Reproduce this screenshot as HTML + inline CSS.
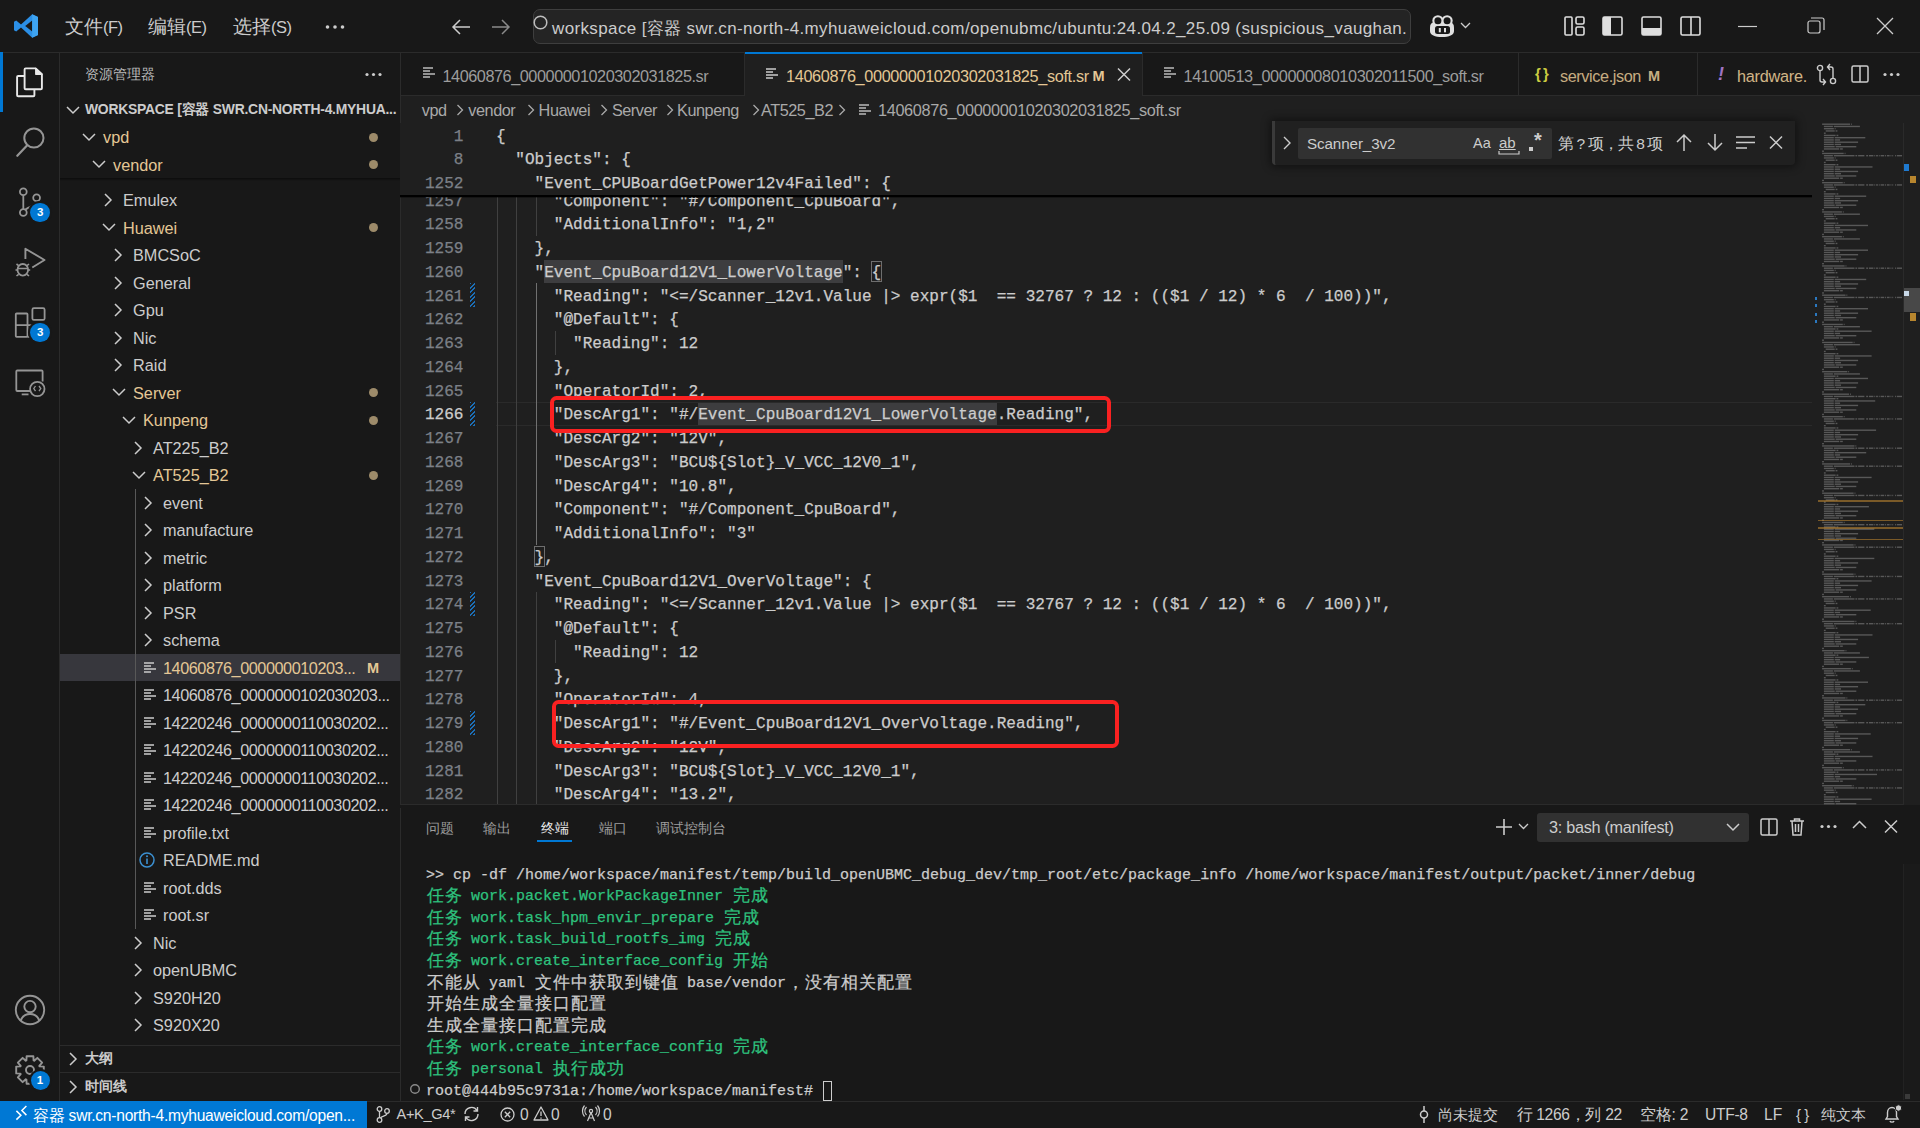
<!DOCTYPE html><html><head><meta charset="utf-8"><style>
*{margin:0;padding:0;box-sizing:border-box}
html,body{width:1920px;height:1128px;overflow:hidden;background:#181818}
body{position:relative;font-family:"Liberation Sans",sans-serif;color:#cccccc;font-size:16.25px}
.a{position:absolute;white-space:pre}
.mono{font-family:"Liberation Mono",monospace;-webkit-text-stroke:0.25px currentColor}
svg{position:absolute;overflow:visible}
</style></head><body><div class="a" style="left:400px;top:95.75px;width:1520px;height:708.5px;background:#1f1f1f"></div>
<div class="a" style="left:0px;top:51.5px;width:1920px;height:1px;background:#2b2b2b"></div>
<div class="a" style="left:59px;top:52px;width:1px;height:1048.5px;background:#2b2b2b"></div>
<div class="a" style="left:399.5px;top:52px;width:1px;height:1048.5px;background:#2b2b2b"></div>
<svg style="left:13px;top:13px;" width="26" height="26" viewBox="0 0 26 26"><path d="M19.2 1.2 L25 4 V22 L19.2 24.8 L8 14.6 L3.2 18.4 L1 17.2 V8.8 L3.2 7.6 L8 11.4 Z" fill="#2b8fe6"/><path d="M19.2 7.6 V18.4 L12.2 13 Z" fill="#181818"/><path d="M19.2 1.2 L25 4 V22 L19.2 24.8 Z" fill="#3ea4f2"/></svg>
<div class="a" style="left:65px;top:9px;height:36px;line-height:36px;color:#cccccc;font-size:19.3px">文件<span style="font-size:16.5px;letter-spacing:-0.5px">(F)</span></div>
<div class="a" style="left:148px;top:9px;height:36px;line-height:36px;color:#cccccc;font-size:19.3px">编辑<span style="font-size:16.5px;letter-spacing:-0.5px">(E)</span></div>
<div class="a" style="left:233px;top:9px;height:36px;line-height:36px;color:#cccccc;font-size:19.3px">选择<span style="font-size:16.5px;letter-spacing:-0.5px">(S)</span></div>
<svg style="left:325px;top:24px;" width="22" height="6" viewBox="0 0 22 6"><circle cx="2.5" cy="3" r="1.8" fill="#cccccc"/><circle cx="10.0" cy="3" r="1.8" fill="#cccccc"/><circle cx="17.5" cy="3" r="1.8" fill="#cccccc"/></svg>
<svg style="left:451px;top:17px;" width="20" height="20" viewBox="0 0 20 20"><path d="M19 10 H2 M9 3 L2 10 L9 17" stroke="#cccccc" stroke-width="1.5" fill="none"/></svg>
<svg style="left:491px;top:17px;" width="20" height="20" viewBox="0 0 20 20"><path d="M1 10 H18 M11 3 L18 10 L11 17" stroke="#8a8a8a" stroke-width="1.5" fill="none"/></svg>
<div class="a" style="left:532.5px;top:8.5px;width:878px;height:35.5px;background:#242424;border:1.5px solid #3e3e3e;border-radius:7px"></div>
<svg style="left:533px;top:15px;" width="16" height="16" viewBox="0 0 16 16"><circle cx="7.5" cy="7.5" r="6.3" stroke="#bdbdbd" stroke-width="1.5" fill="none"/></svg>
<div class="a" style="left:552px;top:10.5px;line-height:35.5px;height:35.5px;font-size:17px;letter-spacing:0.37px;color:#cccccc">workspace [容器 swr.cn-north-4.myhuaweicloud.com/openubmc/ubuntu:24.04.2_25.09 (suspicious_vaughan.</div>
<svg style="left:1428px;top:14px;" width="28" height="24" viewBox="0 0 28 24"><path d="M2 13.5 C2 10 3.5 8.5 6 8.5 H22 C24.5 8.5 26 10 26 13.5 V17 C26 21 21 23 14 23 C7 23 2 21 2 17 Z" fill="#e0e0e0"/><circle cx="9.9" cy="6.8" r="5.6" fill="#e0e0e0"/><circle cx="19.1" cy="6.8" r="5.6" fill="#e0e0e0"/><circle cx="9.9" cy="6.8" r="3.5" fill="#181818"/><circle cx="19.1" cy="6.8" r="3.5" fill="#181818"/><rect x="7" y="12" width="15" height="8" rx="2.5" fill="#181818"/><rect x="10.8" y="14" width="2" height="4.3" fill="#e0e0e0"/><rect x="16" y="14" width="2" height="4.3" fill="#e0e0e0"/></svg>
<svg style="left:1460px;top:22px;" width="11" height="7" viewBox="0 0 11 7"><path d="M1 1 L5.5 5.5 L10 1" stroke="#cccccc" stroke-width="1.3" fill="none"/></svg>
<svg style="left:1564px;top:16px;" width="21" height="20" viewBox="0 0 21 20"><rect x="1" y="1" width="7" height="18" rx="1" stroke="#dedede" stroke-width="1.6" fill="none"/><rect x="12" y="1" width="8" height="7" rx="1.5" stroke="#dedede" stroke-width="1.6" fill="none"/><rect x="12" y="11" width="8" height="8" rx="1.5" stroke="#dedede" stroke-width="1.6" fill="none"/></svg>
<svg style="left:1602px;top:16px;" width="21" height="20" viewBox="0 0 21 20"><rect x="1" y="1" width="19" height="18" rx="1.5" stroke="#dedede" stroke-width="1.6" fill="none"/><rect x="1" y="1" width="8" height="18" fill="#dedede"/></svg>
<svg style="left:1641px;top:16px;" width="21" height="20" viewBox="0 0 21 20"><rect x="1" y="1" width="19" height="18" rx="1.5" stroke="#dedede" stroke-width="1.6" fill="none"/><rect x="1" y="12" width="19" height="7" fill="#dedede"/></svg>
<svg style="left:1680px;top:16px;" width="21" height="20" viewBox="0 0 21 20"><rect x="1" y="1" width="19" height="18" rx="1.5" stroke="#dedede" stroke-width="1.6" fill="none"/><line x1="11" y1="1" x2="11" y2="19" stroke="#dedede" stroke-width="1.6"/></svg>
<svg style="left:1738px;top:25px;" width="20" height="3" viewBox="0 0 20 3"><line x1="0" y1="1.5" x2="19" y2="1.5" stroke="#cccccc" stroke-width="1.2"/></svg>
<svg style="left:1807px;top:17px;" width="18" height="18" viewBox="0 0 18 18"><rect x="1" y="4" width="12" height="12" rx="2" stroke="#cccccc" stroke-width="1.2" fill="none"/><path d="M4 1 H15 C16 1 17 2 17 3 V13" stroke="#cccccc" stroke-width="1.2" fill="none"/></svg>
<svg style="left:1876px;top:17px;" width="18" height="18" viewBox="0 0 18 18"><path d="M1 1 L17 17 M17 1 L1 17" stroke="#cccccc" stroke-width="1.3"/></svg>
<div class="a" style="left:0px;top:52px;width:2.5px;height:60px;background:#0078d4"></div>
<svg style="left:0px;top:0px;" width="60" height="420" viewBox="0 0 60 420">
<path d="M24.6 69.5 C24.6 68.9 25.1 68.4 25.7 68.4 H35.7 L41.9 74.3 V88.2 C41.9 88.8 41.4 89.3 40.8 89.3 H25.7 C25.1 89.3 24.6 88.8 24.6 88.2 Z" stroke="#e8e8e8" stroke-width="1.9" fill="none" stroke-linejoin="round"/>
<path d="M35.7 68.4 V74.3 H41.9 Z" fill="#e8e8e8" stroke="#e8e8e8" stroke-width="1.2" stroke-linejoin="round"/>
<path d="M24.6 76 H18.2 C17.6 76 17.1 76.5 17.1 77.1 V95.2 C17.1 95.8 17.6 96.3 18.2 96.3 H33.3 C33.9 96.3 34.4 95.8 34.4 95.2 V89.3" stroke="#e8e8e8" stroke-width="1.9" fill="none" stroke-linejoin="round"/>
<circle cx="33.9" cy="138" r="9.6" stroke="#959595" stroke-width="2" fill="none"/>
<path d="M27 145.6 L17.3 155.8" stroke="#959595" stroke-width="2.2" stroke-linecap="round"/>
<circle cx="23.3" cy="191.8" r="3.4" stroke="#959595" stroke-width="1.8" fill="none"/>
<circle cx="23.3" cy="212.5" r="3.4" stroke="#959595" stroke-width="1.8" fill="none"/>
<circle cx="36.6" cy="197.7" r="3.4" stroke="#959595" stroke-width="1.8" fill="none"/>
<path d="M23.3 195.2 V209.1 M36.6 201.1 C36.6 206 30 206 25.5 209.5" stroke="#959595" stroke-width="1.8" fill="none"/>
<path d="M25.4 259 V248.7 L44.5 260 L32.3 267.5" stroke="#959595" stroke-width="1.9" fill="none" stroke-linejoin="round"/>
<ellipse cx="22.8" cy="269.8" rx="5.3" ry="5.8" stroke="#959595" stroke-width="1.8" fill="none"/>
<path d="M16.5 264 L18.6 265.6 M29 264 L27 265.6 M15.5 270 H17.5 M28.2 270 H30.2 M16.5 276 L18.6 274.3 M29 276 L27 274.3 M17.5 268.5 H28" stroke="#959595" stroke-width="1.6" fill="none"/>
<rect x="15.8" y="313.5" width="11.7" height="23.4" rx="0.8" stroke="#959595" stroke-width="1.8" fill="none"/>
<path d="M15.8 325.2 H39 V336.9 H27.5" stroke="#959595" stroke-width="1.8" fill="none"/>
<rect x="32.4" y="308.2" width="12.2" height="11.7" rx="1.5" stroke="#959595" stroke-width="1.8" fill="none"/>
<path d="M30 391 H17.3 C16.8 391 16.3 390.5 16.3 390 V371.5 C16.3 371 16.8 370.5 17.3 370.5 H41.6 C42.1 370.5 42.6 371 42.6 371.5 V381.5" stroke="#959595" stroke-width="1.8" fill="none"/>
<path d="M21.7 394.4 H28.5" stroke="#959595" stroke-width="1.8"/>
<circle cx="37.3" cy="389" r="7.2" stroke="#959595" stroke-width="1.8" fill="none"/>
<path d="M35.5 386 L33.8 388.5 L35.5 391.2 M39 386 L40.8 388.5 L39 391.2" stroke="#959595" stroke-width="1.3" fill="none"/>
</svg>
<div class="a" style="left:30.450000000000003px;top:202.75px;width:19.5px;height:19.5px;border-radius:50%;background:#0078d4;color:#fff;font-size:11.5px;font-weight:bold;text-align:center;line-height:19.5px;box-shadow:0 0 0 2px #181818">3</div>
<div class="a" style="left:30.450000000000003px;top:322.75px;width:19.5px;height:19.5px;border-radius:50%;background:#0078d4;color:#fff;font-size:11.5px;font-weight:bold;text-align:center;line-height:19.5px;box-shadow:0 0 0 2px #181818">3</div>
<svg style="left:0px;top:990px;" width="60" height="40" viewBox="0 0 60 40"><circle cx="30" cy="20" r="14.2" stroke="#959595" stroke-width="1.9" fill="none"/><circle cx="30" cy="16.6" r="5.7" stroke="#959595" stroke-width="1.9" fill="none"/><path d="M20.5 1020.8 C22.5 1015.5 26 1014 30 1014 C34 1014 37.5 1015.5 39.5 1020.8" stroke="#959595" stroke-width="1.9" fill="none" transform="translate(0,-990)"/></svg>
<svg style="left:15px;top:1055px;" width="30" height="30" viewBox="0 0 30 30"><polygon points="11.62,1.21 18.38,1.21 18.59,5.45 19.21,5.71 22.37,2.86 27.14,7.63 24.29,10.79 24.55,11.41 28.79,11.62 28.79,18.38 24.55,18.59 24.29,19.21 27.14,22.37 22.37,27.14 19.21,24.29 18.59,24.55 18.38,28.79 11.62,28.79 11.41,24.55 10.79,24.29 7.63,27.14 2.86,22.37 5.71,19.21 5.45,18.59 1.21,18.38 1.21,11.62 5.45,11.41 5.71,10.79 2.86,7.63 7.63,2.86 10.79,5.71 11.41,5.45" stroke="#959595" stroke-width="1.9" fill="none" stroke-linejoin="round"/><circle cx="15" cy="15" r="4" stroke="#959595" stroke-width="1.9" fill="none"/></svg>
<div class="a" style="left:30.5px;top:1070.5px;width:19px;height:19px;border-radius:50%;background:#0078d4;color:#fff;font-size:11.5px;font-weight:bold;text-align:center;line-height:19px;box-shadow:0 0 0 2px #181818">1</div>
<div class="a" style="left:85px;top:52.5px;line-height:44px;height:44px;font-size:13.8px;color:#bbbbbb">资源管理器</div>
<svg style="left:365px;top:72px;" width="18" height="5" viewBox="0 0 18 5"><circle cx="2.0" cy="2.5" r="1.6" fill="#cccccc"/><circle cx="8.5" cy="2.5" r="1.6" fill="#cccccc"/><circle cx="15.0" cy="2.5" r="1.6" fill="#cccccc"/></svg>
<svg style="left:66px;top:105.5px;" width="14" height="8" viewBox="0 0 14 8"><path d="M1 1 L7 7 L13 1" stroke="#cccccc" stroke-width="1.5" fill="none"/></svg>
<div class="a" style="left:85px;top:95.75px;line-height:27.5px;height:27.5px;font-size:13.9px;font-weight:bold;color:#cccccc;letter-spacing:-0.24px">WORKSPACE [容器 SWR.CN-NORTH-4.MYHUA...</div>
<svg style="left:104.3px;top:193.25px;" width="8" height="14" viewBox="0 0 8 14"><path d="M1 1 L7 7 L1 13" stroke="#cccccc" stroke-width="1.5" fill="none"/></svg>
<div class="a" style="left:123px;top:187.25px;line-height:27.5px;height:27.5px;color:#cccccc;letter-spacing:0">Emulex</div>
<svg style="left:102px;top:223.25px;" width="14" height="8" viewBox="0 0 14 8"><path d="M1 1 L7 7 L13 1" stroke="#cccccc" stroke-width="1.5" fill="none"/></svg>
<div class="a" style="left:123px;top:214.75px;line-height:27.5px;height:27.5px;color:#e4c795;letter-spacing:0">Huawei</div>
<div class="a" style="left:369px;top:223.0px;width:9px;height:9px;border-radius:50%;background:#9d8b6a"></div>
<svg style="left:114.3px;top:248.25px;" width="8" height="14" viewBox="0 0 8 14"><path d="M1 1 L7 7 L1 13" stroke="#cccccc" stroke-width="1.5" fill="none"/></svg>
<div class="a" style="left:133px;top:242.25px;line-height:27.5px;height:27.5px;color:#cccccc;letter-spacing:0">BMCSoC</div>
<svg style="left:114.3px;top:275.75px;" width="8" height="14" viewBox="0 0 8 14"><path d="M1 1 L7 7 L1 13" stroke="#cccccc" stroke-width="1.5" fill="none"/></svg>
<div class="a" style="left:133px;top:269.75px;line-height:27.5px;height:27.5px;color:#cccccc;letter-spacing:0">General</div>
<svg style="left:114.3px;top:303.25px;" width="8" height="14" viewBox="0 0 8 14"><path d="M1 1 L7 7 L1 13" stroke="#cccccc" stroke-width="1.5" fill="none"/></svg>
<div class="a" style="left:133px;top:297.25px;line-height:27.5px;height:27.5px;color:#cccccc;letter-spacing:0">Gpu</div>
<svg style="left:114.3px;top:330.75px;" width="8" height="14" viewBox="0 0 8 14"><path d="M1 1 L7 7 L1 13" stroke="#cccccc" stroke-width="1.5" fill="none"/></svg>
<div class="a" style="left:133px;top:324.75px;line-height:27.5px;height:27.5px;color:#cccccc;letter-spacing:0">Nic</div>
<svg style="left:114.3px;top:358.25px;" width="8" height="14" viewBox="0 0 8 14"><path d="M1 1 L7 7 L1 13" stroke="#cccccc" stroke-width="1.5" fill="none"/></svg>
<div class="a" style="left:133px;top:352.25px;line-height:27.5px;height:27.5px;color:#cccccc;letter-spacing:0">Raid</div>
<svg style="left:112px;top:388.25px;" width="14" height="8" viewBox="0 0 14 8"><path d="M1 1 L7 7 L13 1" stroke="#cccccc" stroke-width="1.5" fill="none"/></svg>
<div class="a" style="left:133px;top:379.75px;line-height:27.5px;height:27.5px;color:#e4c795;letter-spacing:0">Server</div>
<div class="a" style="left:369px;top:388.0px;width:9px;height:9px;border-radius:50%;background:#9d8b6a"></div>
<svg style="left:122px;top:415.75px;" width="14" height="8" viewBox="0 0 14 8"><path d="M1 1 L7 7 L13 1" stroke="#cccccc" stroke-width="1.5" fill="none"/></svg>
<div class="a" style="left:143px;top:407.25px;line-height:27.5px;height:27.5px;color:#e4c795;letter-spacing:0">Kunpeng</div>
<div class="a" style="left:369px;top:415.5px;width:9px;height:9px;border-radius:50%;background:#9d8b6a"></div>
<svg style="left:134.3px;top:440.75px;" width="8" height="14" viewBox="0 0 8 14"><path d="M1 1 L7 7 L1 13" stroke="#cccccc" stroke-width="1.5" fill="none"/></svg>
<div class="a" style="left:153px;top:434.75px;line-height:27.5px;height:27.5px;color:#cccccc;letter-spacing:0">AT225_B2</div>
<svg style="left:132px;top:470.75px;" width="14" height="8" viewBox="0 0 14 8"><path d="M1 1 L7 7 L13 1" stroke="#cccccc" stroke-width="1.5" fill="none"/></svg>
<div class="a" style="left:153px;top:462.25px;line-height:27.5px;height:27.5px;color:#e4c795;letter-spacing:0">AT525_B2</div>
<div class="a" style="left:369px;top:470.5px;width:9px;height:9px;border-radius:50%;background:#9d8b6a"></div>
<svg style="left:144.3px;top:495.75px;" width="8" height="14" viewBox="0 0 8 14"><path d="M1 1 L7 7 L1 13" stroke="#cccccc" stroke-width="1.5" fill="none"/></svg>
<div class="a" style="left:163px;top:489.75px;line-height:27.5px;height:27.5px;color:#cccccc;letter-spacing:0">event</div>
<svg style="left:144.3px;top:523.25px;" width="8" height="14" viewBox="0 0 8 14"><path d="M1 1 L7 7 L1 13" stroke="#cccccc" stroke-width="1.5" fill="none"/></svg>
<div class="a" style="left:163px;top:517.25px;line-height:27.5px;height:27.5px;color:#cccccc;letter-spacing:0">manufacture</div>
<svg style="left:144.3px;top:550.75px;" width="8" height="14" viewBox="0 0 8 14"><path d="M1 1 L7 7 L1 13" stroke="#cccccc" stroke-width="1.5" fill="none"/></svg>
<div class="a" style="left:163px;top:544.75px;line-height:27.5px;height:27.5px;color:#cccccc;letter-spacing:0">metric</div>
<svg style="left:144.3px;top:578.25px;" width="8" height="14" viewBox="0 0 8 14"><path d="M1 1 L7 7 L1 13" stroke="#cccccc" stroke-width="1.5" fill="none"/></svg>
<div class="a" style="left:163px;top:572.25px;line-height:27.5px;height:27.5px;color:#cccccc;letter-spacing:0">platform</div>
<svg style="left:144.3px;top:605.75px;" width="8" height="14" viewBox="0 0 8 14"><path d="M1 1 L7 7 L1 13" stroke="#cccccc" stroke-width="1.5" fill="none"/></svg>
<div class="a" style="left:163px;top:599.75px;line-height:27.5px;height:27.5px;color:#cccccc;letter-spacing:0">PSR</div>
<svg style="left:144.3px;top:633.25px;" width="8" height="14" viewBox="0 0 8 14"><path d="M1 1 L7 7 L1 13" stroke="#cccccc" stroke-width="1.5" fill="none"/></svg>
<div class="a" style="left:163px;top:627.25px;line-height:27.5px;height:27.5px;color:#cccccc;letter-spacing:0">schema</div>
<div class="a" style="left:60px;top:653.75px;width:339.5px;height:27.5px;background:#37373d"></div>
<svg style="left:143.5px;top:661.75px;" width="12" height="12" viewBox="0 0 12 12"><path d="M0 1 H10 M0 4 H7 M0 7 H12 M0 10 H7" stroke="#cccccc" stroke-width="1.6" fill="none"/></svg>
<div class="a" style="left:163px;top:654.75px;line-height:27.5px;height:27.5px;color:#e4c795;letter-spacing:-0.46px">14060876_000000010203...</div>
<div class="a" style="left:367px;top:654.75px;line-height:27.5px;height:27.5px;color:#e4c795;font-size:14.5px;font-weight:bold">M</div>
<svg style="left:143.5px;top:689.25px;" width="12" height="12" viewBox="0 0 12 12"><path d="M0 1 H10 M0 4 H7 M0 7 H12 M0 10 H7" stroke="#cccccc" stroke-width="1.6" fill="none"/></svg>
<div class="a" style="left:163px;top:682.25px;line-height:27.5px;height:27.5px;color:#cccccc;letter-spacing:-0.46px">14060876_0000000102030203...</div>
<svg style="left:143.5px;top:716.75px;" width="12" height="12" viewBox="0 0 12 12"><path d="M0 1 H10 M0 4 H7 M0 7 H12 M0 10 H7" stroke="#cccccc" stroke-width="1.6" fill="none"/></svg>
<div class="a" style="left:163px;top:709.75px;line-height:27.5px;height:27.5px;color:#cccccc;letter-spacing:-0.46px">14220246_0000000110030202...</div>
<svg style="left:143.5px;top:744.25px;" width="12" height="12" viewBox="0 0 12 12"><path d="M0 1 H10 M0 4 H7 M0 7 H12 M0 10 H7" stroke="#cccccc" stroke-width="1.6" fill="none"/></svg>
<div class="a" style="left:163px;top:737.25px;line-height:27.5px;height:27.5px;color:#cccccc;letter-spacing:-0.46px">14220246_0000000110030202...</div>
<svg style="left:143.5px;top:771.75px;" width="12" height="12" viewBox="0 0 12 12"><path d="M0 1 H10 M0 4 H7 M0 7 H12 M0 10 H7" stroke="#cccccc" stroke-width="1.6" fill="none"/></svg>
<div class="a" style="left:163px;top:764.75px;line-height:27.5px;height:27.5px;color:#cccccc;letter-spacing:-0.46px">14220246_0000000110030202...</div>
<svg style="left:143.5px;top:799.25px;" width="12" height="12" viewBox="0 0 12 12"><path d="M0 1 H10 M0 4 H7 M0 7 H12 M0 10 H7" stroke="#cccccc" stroke-width="1.6" fill="none"/></svg>
<div class="a" style="left:163px;top:792.25px;line-height:27.5px;height:27.5px;color:#cccccc;letter-spacing:-0.46px">14220246_0000000110030202...</div>
<svg style="left:143.5px;top:826.75px;" width="12" height="12" viewBox="0 0 12 12"><path d="M0 1 H10 M0 4 H7 M0 7 H12 M0 10 H7" stroke="#cccccc" stroke-width="1.6" fill="none"/></svg>
<div class="a" style="left:163px;top:819.75px;line-height:27.5px;height:27.5px;color:#cccccc;letter-spacing:0">profile.txt</div>
<svg style="left:138.5px;top:852.25px;" width="16" height="16" viewBox="0 0 16 16"><circle cx="8" cy="8" r="7" stroke="#3b8fd0" stroke-width="1.5" fill="none"/><rect x="7.2" y="6.5" width="1.6" height="5.5" fill="#3b8fd0"/><circle cx="8" cy="4.3" r="1" fill="#3b8fd0"/></svg>
<div class="a" style="left:163px;top:847.25px;line-height:27.5px;height:27.5px;color:#cccccc;letter-spacing:0">README.md</div>
<svg style="left:143.5px;top:881.75px;" width="12" height="12" viewBox="0 0 12 12"><path d="M0 1 H10 M0 4 H7 M0 7 H12 M0 10 H7" stroke="#cccccc" stroke-width="1.6" fill="none"/></svg>
<div class="a" style="left:163px;top:874.75px;line-height:27.5px;height:27.5px;color:#cccccc;letter-spacing:0">root.dds</div>
<svg style="left:143.5px;top:909.25px;" width="12" height="12" viewBox="0 0 12 12"><path d="M0 1 H10 M0 4 H7 M0 7 H12 M0 10 H7" stroke="#cccccc" stroke-width="1.6" fill="none"/></svg>
<div class="a" style="left:163px;top:902.25px;line-height:27.5px;height:27.5px;color:#cccccc;letter-spacing:0">root.sr</div>
<svg style="left:134.3px;top:935.75px;" width="8" height="14" viewBox="0 0 8 14"><path d="M1 1 L7 7 L1 13" stroke="#cccccc" stroke-width="1.5" fill="none"/></svg>
<div class="a" style="left:153px;top:929.75px;line-height:27.5px;height:27.5px;color:#cccccc;letter-spacing:0">Nic</div>
<svg style="left:134.3px;top:963.25px;" width="8" height="14" viewBox="0 0 8 14"><path d="M1 1 L7 7 L1 13" stroke="#cccccc" stroke-width="1.5" fill="none"/></svg>
<div class="a" style="left:153px;top:957.25px;line-height:27.5px;height:27.5px;color:#cccccc;letter-spacing:0">openUBMC</div>
<svg style="left:134.3px;top:990.75px;" width="8" height="14" viewBox="0 0 8 14"><path d="M1 1 L7 7 L1 13" stroke="#cccccc" stroke-width="1.5" fill="none"/></svg>
<div class="a" style="left:153px;top:984.75px;line-height:27.5px;height:27.5px;color:#cccccc;letter-spacing:0">S920H20</div>
<svg style="left:134.3px;top:1018.25px;" width="8" height="14" viewBox="0 0 8 14"><path d="M1 1 L7 7 L1 13" stroke="#cccccc" stroke-width="1.5" fill="none"/></svg>
<div class="a" style="left:153px;top:1012.25px;line-height:27.5px;height:27.5px;color:#cccccc;letter-spacing:0">S920X20</div>
<div class="a" style="left:135.3px;top:488.75px;width:1px;height:440.0px;background:#585858"></div>
<div class="a" style="left:60px;top:123.25px;width:339.5px;height:55px;background:#181818"></div>
<svg style="left:82px;top:132.75px;" width="14" height="8" viewBox="0 0 14 8"><path d="M1 1 L7 7 L13 1" stroke="#cccccc" stroke-width="1.5" fill="none"/></svg>
<div class="a" style="left:103px;top:124.25px;line-height:27.5px;height:27.5px;color:#e4c795;letter-spacing:0">vpd</div>
<div class="a" style="left:369px;top:132.5px;width:9px;height:9px;border-radius:50%;background:#9d8b6a"></div>
<svg style="left:92px;top:160.25px;" width="14" height="8" viewBox="0 0 14 8"><path d="M1 1 L7 7 L13 1" stroke="#cccccc" stroke-width="1.5" fill="none"/></svg>
<div class="a" style="left:113px;top:151.75px;line-height:27.5px;height:27.5px;color:#e4c795;letter-spacing:0">vendor</div>
<div class="a" style="left:369px;top:160.0px;width:9px;height:9px;border-radius:50%;background:#9d8b6a"></div>
<div class="a" style="left:60px;top:178.25px;width:339.5px;height:3px;background:linear-gradient(#0c0c0c,rgba(0,0,0,0))"></div>
<div class="a" style="left:60px;top:1044.5px;width:339.5px;height:1px;background:#2b2b2b"></div>
<div class="a" style="left:60px;top:1072.2px;width:339.5px;height:1px;background:#2b2b2b"></div>
<svg style="left:69px;top:1052px;" width="8" height="14" viewBox="0 0 8 14"><path d="M1 1 L7 7 L1 13" stroke="#cccccc" stroke-width="1.5" fill="none"/></svg>
<div class="a" style="left:85px;top:1045px;line-height:27.5px;height:27.5px;font-size:13.9px;font-weight:bold;color:#cccccc">大纲</div>
<svg style="left:69px;top:1079.5px;" width="8" height="14" viewBox="0 0 8 14"><path d="M1 1 L7 7 L1 13" stroke="#cccccc" stroke-width="1.5" fill="none"/></svg>
<div class="a" style="left:85px;top:1072.7px;line-height:27.5px;height:27.5px;font-size:13.9px;font-weight:bold;color:#cccccc">时间线</div>
<div class="a" style="left:400px;top:94.75px;width:1520px;height:1px;background:#2b2b2b"></div>
<div class="a" style="left:744px;top:52px;width:1px;height:43.75px;background:#2b2b2b"></div>
<div class="a" style="left:1142px;top:52px;width:1px;height:43.75px;background:#2b2b2b"></div>
<div class="a" style="left:1518px;top:52px;width:1px;height:43.75px;background:#2b2b2b"></div>
<div class="a" style="left:1697px;top:52px;width:1px;height:43.75px;background:#2b2b2b"></div>
<div class="a" style="left:744.5px;top:52px;width:397.5px;height:44.5px;background:#1f1f1f"></div>
<div class="a" style="left:744.5px;top:52px;width:397.5px;height:1.8px;background:#0078d4"></div>
<svg style="left:766px;top:68px;" width="12" height="12" viewBox="0 0 12 12"><path d="M0 1 H10 M0 4 H7 M0 7 H12 M0 10 H7" stroke="#cccccc" stroke-width="1.6" fill="none"/></svg>
<div class="a" style="left:786px;top:53.5px;line-height:44px;height:44px;color:#e4c795;letter-spacing:-0.34px">14060876_00000001020302031825_soft.sr</div>
<div class="a" style="left:1092.5px;top:53.5px;line-height:44px;height:44px;color:#e4c795;font-size:14.5px;font-weight:bold">M</div>
<svg style="left:1117px;top:68px;" width="14" height="13" viewBox="0 0 14 13"><path d="M1 0.5 L13 12.5 M13 0.5 L1 12.5" stroke="#cccccc" stroke-width="1.5"/></svg>
<svg style="left:422.5px;top:67px;" width="12" height="12" viewBox="0 0 12 12"><path d="M0 1 H10 M0 4 H7 M0 7 H12 M0 10 H7" stroke="#bbbbbb" stroke-width="1.6" fill="none"/></svg>
<div class="a" style="left:442.5px;top:53.5px;line-height:44px;height:44px;color:#9d9d9d;letter-spacing:-0.45px">14060876_00000001020302031825.sr</div>
<svg style="left:1164px;top:67px;" width="12" height="12" viewBox="0 0 12 12"><path d="M0 1 H10 M0 4 H7 M0 7 H12 M0 10 H7" stroke="#bbbbbb" stroke-width="1.6" fill="none"/></svg>
<div class="a" style="left:1183.5px;top:53.5px;line-height:44px;height:44px;color:#9d9d9d;letter-spacing:-0.38px">14100513_00000008010302011500_soft.sr</div>
<div class="a" style="left:1535px;top:53px;line-height:42px;height:42px;color:#cbcb41;font-weight:bold;font-size:15px;letter-spacing:-1px">{ }</div>
<div class="a" style="left:1560px;top:53.5px;line-height:44px;height:44px;color:#e4c795;opacity:0.85;letter-spacing:-0.4px">service.json</div>
<div class="a" style="left:1648px;top:53.5px;line-height:44px;height:44px;color:#e4c795;opacity:0.85;font-size:14.5px;font-weight:bold">M</div>
<div class="a" style="left:1718px;top:52px;line-height:44px;height:44px;color:#a074c4;font-weight:bold;font-size:18px;font-style:italic">!</div>
<div class="a" style="left:1737px;top:53.5px;line-height:44px;height:44px;color:#e4c795;opacity:0.9;letter-spacing:-0.25px">hardware.</div>
<svg style="left:1816px;top:64px;" width="21" height="21" viewBox="0 0 21 21"><circle cx="4" cy="4" r="2.6" stroke="#cccccc" stroke-width="1.4" fill="none"/><circle cx="17" cy="17" r="2.6" stroke="#cccccc" stroke-width="1.4" fill="none"/><path d="M4 6.6 V16 C4 17 5 18 6 18 H9 M7 15 L9.5 18 L7 21 M17 14.4 V5 C17 4 16 3 15 3 H12 M14 0 L11.5 3 L14 6" stroke="#cccccc" stroke-width="1.4" fill="none"/></svg>
<svg style="left:1851px;top:65px;" width="18" height="18" viewBox="0 0 18 18"><rect x="1" y="1" width="16" height="16" rx="1.5" stroke="#cccccc" stroke-width="1.5" fill="none"/><line x1="9" y1="1" x2="9" y2="17" stroke="#cccccc" stroke-width="1.5"/></svg>
<svg style="left:1883px;top:72px;" width="18" height="5" viewBox="0 0 18 5"><circle cx="2.0" cy="2.5" r="1.6" fill="#cccccc"/><circle cx="8.5" cy="2.5" r="1.6" fill="#cccccc"/><circle cx="15.0" cy="2.5" r="1.6" fill="#cccccc"/></svg>
<div class="a" style="left:421.8px;top:97px;line-height:27px;height:27px;color:#a9a9a9;letter-spacing:-0.45px">vpd</div>
<div class="a" style="left:468.3px;top:97px;line-height:27px;height:27px;color:#a9a9a9;letter-spacing:-0.45px">vendor</div>
<div class="a" style="left:538.6px;top:97px;line-height:27px;height:27px;color:#a9a9a9;letter-spacing:-0.45px">Huawei</div>
<div class="a" style="left:611.9px;top:97px;line-height:27px;height:27px;color:#a9a9a9;letter-spacing:-0.45px">Server</div>
<div class="a" style="left:677px;top:97px;line-height:27px;height:27px;color:#a9a9a9;letter-spacing:-0.45px">Kunpeng</div>
<div class="a" style="left:761px;top:97px;line-height:27px;height:27px;color:#a9a9a9;letter-spacing:-0.45px">AT525_B2</div>
<svg style="left:455.5px;top:104px;" width="8" height="12" viewBox="0 0 8 12"><path d="M1.5 1 L6.5 6 L1.5 11" stroke="#a9a9a9" stroke-width="1.3" fill="none"/></svg>
<svg style="left:527px;top:104px;" width="8" height="12" viewBox="0 0 8 12"><path d="M1.5 1 L6.5 6 L1.5 11" stroke="#a9a9a9" stroke-width="1.3" fill="none"/></svg>
<svg style="left:600px;top:104px;" width="8" height="12" viewBox="0 0 8 12"><path d="M1.5 1 L6.5 6 L1.5 11" stroke="#a9a9a9" stroke-width="1.3" fill="none"/></svg>
<svg style="left:666px;top:104px;" width="8" height="12" viewBox="0 0 8 12"><path d="M1.5 1 L6.5 6 L1.5 11" stroke="#a9a9a9" stroke-width="1.3" fill="none"/></svg>
<svg style="left:752px;top:104px;" width="8" height="12" viewBox="0 0 8 12"><path d="M1.5 1 L6.5 6 L1.5 11" stroke="#a9a9a9" stroke-width="1.3" fill="none"/></svg>
<svg style="left:838px;top:104px;" width="8" height="12" viewBox="0 0 8 12"><path d="M1.5 1 L6.5 6 L1.5 11" stroke="#a9a9a9" stroke-width="1.3" fill="none"/></svg>
<svg style="left:858.5px;top:104px;" width="12" height="12" viewBox="0 0 12 12"><path d="M0 1 H10 M0 4 H7 M0 7 H12 M0 10 H7" stroke="#bbbbbb" stroke-width="1.6" fill="none"/></svg>
<div class="a" style="left:878px;top:97px;line-height:27px;height:27px;color:#a9a9a9;letter-spacing:-0.34px">14060876_00000001020302031825_soft.sr</div>
<div class="a" style="left:496px;top:402.1px;width:1316px;height:23.75px;border-top:1.5px solid #2a2a2a;border-bottom:1.5px solid #2a2a2a"></div>
<div class="a" style="left:544.18px;top:260.1px;width:298.71599999999995px;height:22.75px;background:#3d3d3f"></div>
<div class="a" style="left:698.356px;top:402.6px;width:298.71599999999995px;height:22.75px;background:#3d3d3f"></div>
<div class="a" style="left:871.304px;top:260.6px;width:10.636px;height:21.75px;border:1px solid #6e6e6e"></div>
<div class="a" style="left:534.044px;top:545.6px;width:10.636px;height:21.75px;border:1px solid #6e6e6e"></div>
<div class="a" style="left:497.0px;top:188.35px;width:1.2px;height:617.5px;background:#404040"></div>
<div class="a" style="left:516.272px;top:188.35px;width:1.2px;height:617.5px;background:#404040"></div>
<div class="a" style="left:535.544px;top:188.35px;width:1.2px;height:47.5px;background:#404040"></div>
<div class="a" style="left:535.544px;top:283.35px;width:1.2px;height:261.25px;background:#707070"></div>
<div class="a" style="left:535.544px;top:592.1px;width:1.2px;height:213.75px;background:#404040"></div>
<div class="a" style="left:554.816px;top:330.85px;width:1.2px;height:23.75px;background:#404040"></div>
<div class="a" style="left:554.816px;top:639.6px;width:1.2px;height:23.75px;background:#404040"></div>
<div class="a mono" style="left:496px;top:190.65px;height:23.75px;line-height:23.75px;font-size:16.06px;color:#cccccc">      &quot;Component&quot;: &quot;#/Component_CpuBoard&quot;,</div>
<div class="a mono" style="left:400px;width:63.5px;text-align:right;top:190.65px;height:23.75px;line-height:23.75px;font-size:16.06px;color:#7c8087">1257</div>
<div class="a mono" style="left:496px;top:214.4px;height:23.75px;line-height:23.75px;font-size:16.06px;color:#cccccc">      &quot;AdditionalInfo&quot;: &quot;1,2&quot;</div>
<div class="a mono" style="left:400px;width:63.5px;text-align:right;top:214.4px;height:23.75px;line-height:23.75px;font-size:16.06px;color:#7c8087">1258</div>
<div class="a mono" style="left:496px;top:238.15px;height:23.75px;line-height:23.75px;font-size:16.06px;color:#cccccc">    },</div>
<div class="a mono" style="left:400px;width:63.5px;text-align:right;top:238.15px;height:23.75px;line-height:23.75px;font-size:16.06px;color:#7c8087">1259</div>
<div class="a mono" style="left:496px;top:261.90000000000003px;height:23.75px;line-height:23.75px;font-size:16.06px;color:#cccccc">    &quot;Event_CpuBoard12V1_LowerVoltage&quot;: {</div>
<div class="a mono" style="left:400px;width:63.5px;text-align:right;top:261.90000000000003px;height:23.75px;line-height:23.75px;font-size:16.06px;color:#7c8087">1260</div>
<div class="a mono" style="left:496px;top:285.65000000000003px;height:23.75px;line-height:23.75px;font-size:16.06px;color:#cccccc">      &quot;Reading&quot;: &quot;&lt;=/Scanner_12v1.Value |&gt; expr($1  == 32767 ? 12 : (($1 / 12) * 6  / 100))&quot;,</div>
<div class="a mono" style="left:400px;width:63.5px;text-align:right;top:285.65000000000003px;height:23.75px;line-height:23.75px;font-size:16.06px;color:#7c8087">1261</div>
<div class="a mono" style="left:496px;top:309.40000000000003px;height:23.75px;line-height:23.75px;font-size:16.06px;color:#cccccc">      &quot;@Default&quot;: {</div>
<div class="a mono" style="left:400px;width:63.5px;text-align:right;top:309.40000000000003px;height:23.75px;line-height:23.75px;font-size:16.06px;color:#7c8087">1262</div>
<div class="a mono" style="left:496px;top:333.15000000000003px;height:23.75px;line-height:23.75px;font-size:16.06px;color:#cccccc">        &quot;Reading&quot;: 12</div>
<div class="a mono" style="left:400px;width:63.5px;text-align:right;top:333.15000000000003px;height:23.75px;line-height:23.75px;font-size:16.06px;color:#7c8087">1263</div>
<div class="a mono" style="left:496px;top:356.90000000000003px;height:23.75px;line-height:23.75px;font-size:16.06px;color:#cccccc">      },</div>
<div class="a mono" style="left:400px;width:63.5px;text-align:right;top:356.90000000000003px;height:23.75px;line-height:23.75px;font-size:16.06px;color:#7c8087">1264</div>
<div class="a mono" style="left:496px;top:380.65000000000003px;height:23.75px;line-height:23.75px;font-size:16.06px;color:#cccccc">      &quot;OperatorId&quot;: 2,</div>
<div class="a mono" style="left:400px;width:63.5px;text-align:right;top:380.65000000000003px;height:23.75px;line-height:23.75px;font-size:16.06px;color:#7c8087">1265</div>
<div class="a mono" style="left:496px;top:404.40000000000003px;height:23.75px;line-height:23.75px;font-size:16.06px;color:#cccccc">      &quot;DescArg1&quot;: &quot;#/Event_CpuBoard12V1_LowerVoltage.Reading&quot;,</div>
<div class="a mono" style="left:400px;width:63.5px;text-align:right;top:404.40000000000003px;height:23.75px;line-height:23.75px;font-size:16.06px;color:#cccccc">1266</div>
<div class="a mono" style="left:496px;top:428.15000000000003px;height:23.75px;line-height:23.75px;font-size:16.06px;color:#cccccc">      &quot;DescArg2&quot;: &quot;12V&quot;,</div>
<div class="a mono" style="left:400px;width:63.5px;text-align:right;top:428.15000000000003px;height:23.75px;line-height:23.75px;font-size:16.06px;color:#7c8087">1267</div>
<div class="a mono" style="left:496px;top:451.90000000000003px;height:23.75px;line-height:23.75px;font-size:16.06px;color:#cccccc">      &quot;DescArg3&quot;: &quot;BCU${Slot}_V_VCC_12V0_1&quot;,</div>
<div class="a mono" style="left:400px;width:63.5px;text-align:right;top:451.90000000000003px;height:23.75px;line-height:23.75px;font-size:16.06px;color:#7c8087">1268</div>
<div class="a mono" style="left:496px;top:475.65000000000003px;height:23.75px;line-height:23.75px;font-size:16.06px;color:#cccccc">      &quot;DescArg4&quot;: &quot;10.8&quot;,</div>
<div class="a mono" style="left:400px;width:63.5px;text-align:right;top:475.65000000000003px;height:23.75px;line-height:23.75px;font-size:16.06px;color:#7c8087">1269</div>
<div class="a mono" style="left:496px;top:499.40000000000003px;height:23.75px;line-height:23.75px;font-size:16.06px;color:#cccccc">      &quot;Component&quot;: &quot;#/Component_CpuBoard&quot;,</div>
<div class="a mono" style="left:400px;width:63.5px;text-align:right;top:499.40000000000003px;height:23.75px;line-height:23.75px;font-size:16.06px;color:#7c8087">1270</div>
<div class="a mono" style="left:496px;top:523.15px;height:23.75px;line-height:23.75px;font-size:16.06px;color:#cccccc">      &quot;AdditionalInfo&quot;: &quot;3&quot;</div>
<div class="a mono" style="left:400px;width:63.5px;text-align:right;top:523.15px;height:23.75px;line-height:23.75px;font-size:16.06px;color:#7c8087">1271</div>
<div class="a mono" style="left:496px;top:546.9px;height:23.75px;line-height:23.75px;font-size:16.06px;color:#cccccc">    },</div>
<div class="a mono" style="left:400px;width:63.5px;text-align:right;top:546.9px;height:23.75px;line-height:23.75px;font-size:16.06px;color:#7c8087">1272</div>
<div class="a mono" style="left:496px;top:570.65px;height:23.75px;line-height:23.75px;font-size:16.06px;color:#cccccc">    &quot;Event_CpuBoard12V1_OverVoltage&quot;: {</div>
<div class="a mono" style="left:400px;width:63.5px;text-align:right;top:570.65px;height:23.75px;line-height:23.75px;font-size:16.06px;color:#7c8087">1273</div>
<div class="a mono" style="left:496px;top:594.4px;height:23.75px;line-height:23.75px;font-size:16.06px;color:#cccccc">      &quot;Reading&quot;: &quot;&lt;=/Scanner_12v1.Value |&gt; expr($1  == 32767 ? 12 : (($1 / 12) * 6  / 100))&quot;,</div>
<div class="a mono" style="left:400px;width:63.5px;text-align:right;top:594.4px;height:23.75px;line-height:23.75px;font-size:16.06px;color:#7c8087">1274</div>
<div class="a mono" style="left:496px;top:618.15px;height:23.75px;line-height:23.75px;font-size:16.06px;color:#cccccc">      &quot;@Default&quot;: {</div>
<div class="a mono" style="left:400px;width:63.5px;text-align:right;top:618.15px;height:23.75px;line-height:23.75px;font-size:16.06px;color:#7c8087">1275</div>
<div class="a mono" style="left:496px;top:641.9px;height:23.75px;line-height:23.75px;font-size:16.06px;color:#cccccc">        &quot;Reading&quot;: 12</div>
<div class="a mono" style="left:400px;width:63.5px;text-align:right;top:641.9px;height:23.75px;line-height:23.75px;font-size:16.06px;color:#7c8087">1276</div>
<div class="a mono" style="left:496px;top:665.65px;height:23.75px;line-height:23.75px;font-size:16.06px;color:#cccccc">      },</div>
<div class="a mono" style="left:400px;width:63.5px;text-align:right;top:665.65px;height:23.75px;line-height:23.75px;font-size:16.06px;color:#7c8087">1277</div>
<div class="a mono" style="left:496px;top:689.4px;height:23.75px;line-height:23.75px;font-size:16.06px;color:#cccccc">      &quot;OperatorId&quot;: 4,</div>
<div class="a mono" style="left:400px;width:63.5px;text-align:right;top:689.4px;height:23.75px;line-height:23.75px;font-size:16.06px;color:#7c8087">1278</div>
<div class="a mono" style="left:496px;top:713.15px;height:23.75px;line-height:23.75px;font-size:16.06px;color:#cccccc">      &quot;DescArg1&quot;: &quot;#/Event_CpuBoard12V1_OverVoltage.Reading&quot;,</div>
<div class="a mono" style="left:400px;width:63.5px;text-align:right;top:713.15px;height:23.75px;line-height:23.75px;font-size:16.06px;color:#7c8087">1279</div>
<div class="a mono" style="left:496px;top:736.9px;height:23.75px;line-height:23.75px;font-size:16.06px;color:#cccccc">      &quot;DescArg2&quot;: &quot;12V&quot;,</div>
<div class="a mono" style="left:400px;width:63.5px;text-align:right;top:736.9px;height:23.75px;line-height:23.75px;font-size:16.06px;color:#7c8087">1280</div>
<div class="a mono" style="left:496px;top:760.65px;height:23.75px;line-height:23.75px;font-size:16.06px;color:#cccccc">      &quot;DescArg3&quot;: &quot;BCU${Slot}_V_VCC_12V0_1&quot;,</div>
<div class="a mono" style="left:400px;width:63.5px;text-align:right;top:760.65px;height:23.75px;line-height:23.75px;font-size:16.06px;color:#7c8087">1281</div>
<div class="a mono" style="left:496px;top:784.4px;height:23.75px;line-height:23.75px;font-size:16.06px;color:#cccccc">      &quot;DescArg4&quot;: &quot;13.2&quot;,</div>
<div class="a mono" style="left:400px;width:63.5px;text-align:right;top:784.4px;height:23.75px;line-height:23.75px;font-size:16.06px;color:#7c8087">1282</div>
<div class="a" style="left:469.6px;top:283.35px;width:5.6px;height:23.75px;background:repeating-linear-gradient(-45deg,#1b6fb8 0 1.6px,#1f1f1f 1.6px 3.2px)"></div>
<div class="a" style="left:469.6px;top:402.1px;width:5.6px;height:23.75px;background:repeating-linear-gradient(-45deg,#1b6fb8 0 1.6px,#1f1f1f 1.6px 3.2px)"></div>
<div class="a" style="left:469.6px;top:592.1px;width:5.6px;height:23.75px;background:repeating-linear-gradient(-45deg,#1b6fb8 0 1.6px,#1f1f1f 1.6px 3.2px)"></div>
<div class="a" style="left:469.6px;top:710.85px;width:5.6px;height:23.75px;background:repeating-linear-gradient(-45deg,#1b6fb8 0 1.6px,#1f1f1f 1.6px 3.2px)"></div>
<div class="a" style="left:400px;top:123.25px;width:1412px;height:71.25px;background:#1f1f1f"></div>
<div class="a mono" style="left:496px;top:125.55px;height:23.75px;line-height:23.75px;font-size:16.06px;color:#cccccc">{</div>
<div class="a mono" style="left:400px;width:63.5px;text-align:right;top:125.55px;height:23.75px;line-height:23.75px;font-size:16.06px;color:#7c8087">1</div>
<div class="a mono" style="left:496px;top:149.3px;height:23.75px;line-height:23.75px;font-size:16.06px;color:#cccccc">  &quot;Objects&quot;: {</div>
<div class="a mono" style="left:400px;width:63.5px;text-align:right;top:149.3px;height:23.75px;line-height:23.75px;font-size:16.06px;color:#7c8087">8</div>
<div class="a mono" style="left:496px;top:173.05px;height:23.75px;line-height:23.75px;font-size:16.06px;color:#cccccc">    &quot;Event_CPUBoardGetPower12v4Failed&quot;: {</div>
<div class="a mono" style="left:400px;width:63.5px;text-align:right;top:173.05px;height:23.75px;line-height:23.75px;font-size:16.06px;color:#7c8087">1252</div>
<div class="a" style="left:400px;top:194.5px;width:1412px;height:3px;background:linear-gradient(#000 0,#000 1.5px,rgba(0,0,0,0.0) 3px)"></div>
<div class="a" style="left:550.4px;top:395.5px;width:560.9px;height:37.8px;border:4.8px solid #fa2121;border-radius:6.5px"></div>
<div class="a" style="left:552px;top:700px;width:566.8px;height:48.3px;border:4.8px solid #fa2121;border-radius:6.5px"></div>
<div class="a" style="left:1272px;top:121px;width:523px;height:44px;background:#202020;box-shadow:0 0 8px 2px rgba(0,0,0,0.45);border-left:3px solid #3a3a3a;border-radius:0 0 4px 4px"></div>
<svg style="left:1283px;top:136px;" width="8" height="14" viewBox="0 0 8 14"><path d="M1 1 L7 7 L1 13" stroke="#cccccc" stroke-width="1.4" fill="none"/></svg>
<div class="a" style="left:1298px;top:127.5px;width:253.5px;height:31.3px;background:#313131;border-radius:2px"></div>
<div class="a" style="left:1307px;top:128px;line-height:31px;height:31px;color:#cccccc;font-size:15.2px;letter-spacing:-0.1px">Scanner_3v2</div>
<div class="a" style="left:1473px;top:127.5px;line-height:31px;height:31px;color:#cccccc;font-size:14.5px">Aa</div>
<div class="a" style="left:1499px;top:127.5px;line-height:30px;height:30px;color:#cccccc;font-size:15px;text-decoration:underline">ab</div>
<svg style="left:1498px;top:151px;" width="22" height="5" viewBox="0 0 22 5"><path d="M1 0 V3 H21 V0" stroke="#cccccc" stroke-width="1.2" fill="none"/></svg>
<div class="a" style="left:1529px;top:146.5px;width:4px;height:4px;background:#cccccc"></div>
<div class="a" style="left:1534px;top:125px;line-height:31px;height:31px;color:#cccccc;font-size:20px;font-weight:bold">*</div>
<div class="a" style="left:1558px;top:122px;line-height:44px;height:44px;color:#cccccc;font-size:15.5px;letter-spacing:-0.9px">第 ? 项，共 8 项</div>
<svg style="left:1676px;top:133px;" width="16" height="19" viewBox="0 0 16 19"><path d="M8 18 V2 M1 9 L8 2 L15 9" stroke="#cccccc" stroke-width="1.5" fill="none"/></svg>
<svg style="left:1707px;top:133px;" width="16" height="19" viewBox="0 0 16 19"><path d="M8 1 V17 M1 10 L8 17 L15 10" stroke="#cccccc" stroke-width="1.5" fill="none"/></svg>
<svg style="left:1736px;top:135px;" width="20" height="15" viewBox="0 0 20 15"><path d="M0 2 H19 M0 7.5 H19 M0 13 H11" stroke="#cccccc" stroke-width="1.5" fill="none"/></svg>
<svg style="left:1769px;top:136px;" width="14" height="13" viewBox="0 0 14 13"><path d="M1 0.5 L13 12.5 M13 0.5 L1 12.5" stroke="#cccccc" stroke-width="1.5"/></svg>
<div class="a" style="left:400px;top:804px;width:1503px;height:4px;background:#181818"></div>
<div class="a" style="left:400px;top:804px;width:1520px;height:1px;background:#2b2b2b"></div>
<div class="a" style="left:426px;top:815px;line-height:28px;height:28px;font-size:13.8px;color:#9d9d9d">问题</div>
<div class="a" style="left:483.4px;top:815px;line-height:28px;height:28px;font-size:13.8px;color:#9d9d9d">输出</div>
<div class="a" style="left:540.6px;top:815px;line-height:28px;height:28px;font-size:13.8px;color:#e7e7e7">终端</div>
<div class="a" style="left:599px;top:815px;line-height:28px;height:28px;font-size:13.8px;color:#9d9d9d">端口</div>
<div class="a" style="left:656px;top:815px;line-height:28px;height:28px;font-size:13.8px;color:#9d9d9d">调试控制台</div>
<div class="a" style="left:537px;top:840px;width:35px;height:1.8px;background:#0078d4"></div>
<svg style="left:1495px;top:818px;" width="18" height="18" viewBox="0 0 18 18"><path d="M9 1 V17 M1 9 H17" stroke="#cccccc" stroke-width="1.6"/></svg>
<svg style="left:1518px;top:823px;" width="11" height="7" viewBox="0 0 11 7"><path d="M1 1 L5.5 5.5 L10 1" stroke="#cccccc" stroke-width="1.3" fill="none"/></svg>
<div class="a" style="left:1537px;top:813px;width:212px;height:29px;background:#313131;border-radius:3px"></div>
<div class="a" style="left:1549px;top:813px;line-height:29px;height:29px;color:#cccccc;letter-spacing:-0.3px">3: bash (manifest)</div>
<svg style="left:1726px;top:823px;" width="14" height="8" viewBox="0 0 14 8"><path d="M1 1 L7 7 L13 1" stroke="#cccccc" stroke-width="1.5" fill="none"/></svg>
<svg style="left:1760px;top:818px;" width="18" height="18" viewBox="0 0 18 18"><rect x="1" y="1" width="16" height="16" rx="1.5" stroke="#cccccc" stroke-width="1.5" fill="none"/><line x1="9" y1="1" x2="9" y2="17" stroke="#cccccc" stroke-width="1.5"/></svg>
<svg style="left:1789px;top:817px;" width="16" height="19" viewBox="0 0 16 19"><path d="M1 4 H15 M5.5 4 V2 H10.5 V4 M3 4 L4 18 H12 L13 4 M6.5 7 V15 M9.5 7 V15" stroke="#cccccc" stroke-width="1.5" fill="none"/></svg>
<svg style="left:1820px;top:824px;" width="18" height="5" viewBox="0 0 18 5"><circle cx="2.0" cy="2.5" r="1.6" fill="#cccccc"/><circle cx="8.5" cy="2.5" r="1.6" fill="#cccccc"/><circle cx="15.0" cy="2.5" r="1.6" fill="#cccccc"/></svg>
<svg style="left:1852px;top:820px;" width="15" height="9" viewBox="0 0 15 9"><path d="M1 8 L7.5 1.5 L14 8" stroke="#cccccc" stroke-width="1.5" fill="none"/></svg>
<svg style="left:1884px;top:820px;" width="14" height="13" viewBox="0 0 14 13"><path d="M1 0.5 L13 12.5 M13 0.5 L1 12.5" stroke="#cccccc" stroke-width="1.5"/></svg>
<div class="a mono" style="left:426px;top:864.5px;height:21.6px;line-height:21.6px;font-size:15.01px;color:#cccccc">&gt;&gt; cp -df /home/workspace/manifest/temp/build_openUBMC_debug_dev/tmp_root/etc/package_info /home/workspace/manifest/output/packet/inner/debug</div>
<div class="a mono" style="left:426px;top:886.1px;height:21.6px;line-height:21.6px;font-size:15.01px;color:#2ec27e"><span style="display:inline-block;width:18.014px;text-align:center;font-size:17px;line-height:21.6px;vertical-align:top">任</span><span style="display:inline-block;width:18.014px;text-align:center;font-size:17px;line-height:21.6px;vertical-align:top">务</span> work.packet.WorkPackageInner <span style="display:inline-block;width:18.014px;text-align:center;font-size:17px;line-height:21.6px;vertical-align:top">完</span><span style="display:inline-block;width:18.014px;text-align:center;font-size:17px;line-height:21.6px;vertical-align:top">成</span></div>
<div class="a mono" style="left:426px;top:907.7px;height:21.6px;line-height:21.6px;font-size:15.01px;color:#2ec27e"><span style="display:inline-block;width:18.014px;text-align:center;font-size:17px;line-height:21.6px;vertical-align:top">任</span><span style="display:inline-block;width:18.014px;text-align:center;font-size:17px;line-height:21.6px;vertical-align:top">务</span> work.task_hpm_envir_prepare <span style="display:inline-block;width:18.014px;text-align:center;font-size:17px;line-height:21.6px;vertical-align:top">完</span><span style="display:inline-block;width:18.014px;text-align:center;font-size:17px;line-height:21.6px;vertical-align:top">成</span></div>
<div class="a mono" style="left:426px;top:929.3px;height:21.6px;line-height:21.6px;font-size:15.01px;color:#2ec27e"><span style="display:inline-block;width:18.014px;text-align:center;font-size:17px;line-height:21.6px;vertical-align:top">任</span><span style="display:inline-block;width:18.014px;text-align:center;font-size:17px;line-height:21.6px;vertical-align:top">务</span> work.task_build_rootfs_img <span style="display:inline-block;width:18.014px;text-align:center;font-size:17px;line-height:21.6px;vertical-align:top">完</span><span style="display:inline-block;width:18.014px;text-align:center;font-size:17px;line-height:21.6px;vertical-align:top">成</span></div>
<div class="a mono" style="left:426px;top:950.9px;height:21.6px;line-height:21.6px;font-size:15.01px;color:#2ec27e"><span style="display:inline-block;width:18.014px;text-align:center;font-size:17px;line-height:21.6px;vertical-align:top">任</span><span style="display:inline-block;width:18.014px;text-align:center;font-size:17px;line-height:21.6px;vertical-align:top">务</span> work.create_interface_config <span style="display:inline-block;width:18.014px;text-align:center;font-size:17px;line-height:21.6px;vertical-align:top">开</span><span style="display:inline-block;width:18.014px;text-align:center;font-size:17px;line-height:21.6px;vertical-align:top">始</span></div>
<div class="a mono" style="left:426px;top:972.5px;height:21.6px;line-height:21.6px;font-size:15.01px;color:#cccccc"><span style="display:inline-block;width:18.014px;text-align:center;font-size:17px;line-height:21.6px;vertical-align:top">不</span><span style="display:inline-block;width:18.014px;text-align:center;font-size:17px;line-height:21.6px;vertical-align:top">能</span><span style="display:inline-block;width:18.014px;text-align:center;font-size:17px;line-height:21.6px;vertical-align:top">从</span> yaml <span style="display:inline-block;width:18.014px;text-align:center;font-size:17px;line-height:21.6px;vertical-align:top">文</span><span style="display:inline-block;width:18.014px;text-align:center;font-size:17px;line-height:21.6px;vertical-align:top">件</span><span style="display:inline-block;width:18.014px;text-align:center;font-size:17px;line-height:21.6px;vertical-align:top">中</span><span style="display:inline-block;width:18.014px;text-align:center;font-size:17px;line-height:21.6px;vertical-align:top">获</span><span style="display:inline-block;width:18.014px;text-align:center;font-size:17px;line-height:21.6px;vertical-align:top">取</span><span style="display:inline-block;width:18.014px;text-align:center;font-size:17px;line-height:21.6px;vertical-align:top">到</span><span style="display:inline-block;width:18.014px;text-align:center;font-size:17px;line-height:21.6px;vertical-align:top">键</span><span style="display:inline-block;width:18.014px;text-align:center;font-size:17px;line-height:21.6px;vertical-align:top">值</span> base/vendor<span style="display:inline-block;width:18.014px;text-align:center;font-size:17px;line-height:21.6px;vertical-align:top">，</span><span style="display:inline-block;width:18.014px;text-align:center;font-size:17px;line-height:21.6px;vertical-align:top">没</span><span style="display:inline-block;width:18.014px;text-align:center;font-size:17px;line-height:21.6px;vertical-align:top">有</span><span style="display:inline-block;width:18.014px;text-align:center;font-size:17px;line-height:21.6px;vertical-align:top">相</span><span style="display:inline-block;width:18.014px;text-align:center;font-size:17px;line-height:21.6px;vertical-align:top">关</span><span style="display:inline-block;width:18.014px;text-align:center;font-size:17px;line-height:21.6px;vertical-align:top">配</span><span style="display:inline-block;width:18.014px;text-align:center;font-size:17px;line-height:21.6px;vertical-align:top">置</span></div>
<div class="a mono" style="left:426px;top:994.1px;height:21.6px;line-height:21.6px;font-size:15.01px;color:#cccccc"><span style="display:inline-block;width:18.014px;text-align:center;font-size:17px;line-height:21.6px;vertical-align:top">开</span><span style="display:inline-block;width:18.014px;text-align:center;font-size:17px;line-height:21.6px;vertical-align:top">始</span><span style="display:inline-block;width:18.014px;text-align:center;font-size:17px;line-height:21.6px;vertical-align:top">生</span><span style="display:inline-block;width:18.014px;text-align:center;font-size:17px;line-height:21.6px;vertical-align:top">成</span><span style="display:inline-block;width:18.014px;text-align:center;font-size:17px;line-height:21.6px;vertical-align:top">全</span><span style="display:inline-block;width:18.014px;text-align:center;font-size:17px;line-height:21.6px;vertical-align:top">量</span><span style="display:inline-block;width:18.014px;text-align:center;font-size:17px;line-height:21.6px;vertical-align:top">接</span><span style="display:inline-block;width:18.014px;text-align:center;font-size:17px;line-height:21.6px;vertical-align:top">口</span><span style="display:inline-block;width:18.014px;text-align:center;font-size:17px;line-height:21.6px;vertical-align:top">配</span><span style="display:inline-block;width:18.014px;text-align:center;font-size:17px;line-height:21.6px;vertical-align:top">置</span></div>
<div class="a mono" style="left:426px;top:1015.7px;height:21.6px;line-height:21.6px;font-size:15.01px;color:#cccccc"><span style="display:inline-block;width:18.014px;text-align:center;font-size:17px;line-height:21.6px;vertical-align:top">生</span><span style="display:inline-block;width:18.014px;text-align:center;font-size:17px;line-height:21.6px;vertical-align:top">成</span><span style="display:inline-block;width:18.014px;text-align:center;font-size:17px;line-height:21.6px;vertical-align:top">全</span><span style="display:inline-block;width:18.014px;text-align:center;font-size:17px;line-height:21.6px;vertical-align:top">量</span><span style="display:inline-block;width:18.014px;text-align:center;font-size:17px;line-height:21.6px;vertical-align:top">接</span><span style="display:inline-block;width:18.014px;text-align:center;font-size:17px;line-height:21.6px;vertical-align:top">口</span><span style="display:inline-block;width:18.014px;text-align:center;font-size:17px;line-height:21.6px;vertical-align:top">配</span><span style="display:inline-block;width:18.014px;text-align:center;font-size:17px;line-height:21.6px;vertical-align:top">置</span><span style="display:inline-block;width:18.014px;text-align:center;font-size:17px;line-height:21.6px;vertical-align:top">完</span><span style="display:inline-block;width:18.014px;text-align:center;font-size:17px;line-height:21.6px;vertical-align:top">成</span></div>
<div class="a mono" style="left:426px;top:1037.3px;height:21.6px;line-height:21.6px;font-size:15.01px;color:#2ec27e"><span style="display:inline-block;width:18.014px;text-align:center;font-size:17px;line-height:21.6px;vertical-align:top">任</span><span style="display:inline-block;width:18.014px;text-align:center;font-size:17px;line-height:21.6px;vertical-align:top">务</span> work.create_interface_config <span style="display:inline-block;width:18.014px;text-align:center;font-size:17px;line-height:21.6px;vertical-align:top">完</span><span style="display:inline-block;width:18.014px;text-align:center;font-size:17px;line-height:21.6px;vertical-align:top">成</span></div>
<div class="a mono" style="left:426px;top:1058.9px;height:21.6px;line-height:21.6px;font-size:15.01px;color:#2ec27e"><span style="display:inline-block;width:18.014px;text-align:center;font-size:17px;line-height:21.6px;vertical-align:top">任</span><span style="display:inline-block;width:18.014px;text-align:center;font-size:17px;line-height:21.6px;vertical-align:top">务</span> personal <span style="display:inline-block;width:18.014px;text-align:center;font-size:17px;line-height:21.6px;vertical-align:top">执</span><span style="display:inline-block;width:18.014px;text-align:center;font-size:17px;line-height:21.6px;vertical-align:top">行</span><span style="display:inline-block;width:18.014px;text-align:center;font-size:17px;line-height:21.6px;vertical-align:top">成</span><span style="display:inline-block;width:18.014px;text-align:center;font-size:17px;line-height:21.6px;vertical-align:top">功</span></div>
<div class="a mono" style="left:426px;top:1080.5px;height:21.6px;line-height:21.6px;font-size:15.01px;color:#cccccc">root@444b95c9731a:/home/workspace/manifest# </div>
<div class="a" style="left:823.308px;top:1080.5px;width:9px;height:20px;border:1.5px solid #cccccc"></div>
<svg style="left:409px;top:1083px;" width="12" height="12" viewBox="0 0 12 12"><circle cx="6" cy="6" r="4.3" stroke="#8a8a8a" stroke-width="1.4" fill="none"/></svg>
<div class="a" style="left:0px;top:1100.5px;width:1920px;height:27.5px;background:#181818;border-top:1px solid #2b2b2b"></div>
<div class="a" style="left:0px;top:1101px;width:366.7px;height:27px;background:#0078d4"></div>
<svg style="left:0px;top:1100px;" width="40" height="28" viewBox="0 0 40 28"><path d="M16.4 1110.9 L20.9 1115.2 L16.4 1119.6 M26.4 1106 L21.9 1110.6 L26.4 1115.1" stroke="#ffffff" stroke-width="1.5" fill="none" transform="translate(0,-1100)"/></svg>
<div class="a" style="left:33px;top:1101.5px;line-height:27.5px;height:27.5px;color:#ffffff;font-size:15.6px;letter-spacing:-0.25px">容器 swr.cn-north-4.myhuaweicloud.com/open...</div>
<svg style="left:376px;top:1106px;" width="14" height="17" viewBox="0 0 14 17"><circle cx="3.5" cy="3" r="2.3" stroke="#cccccc" stroke-width="1.3" fill="none"/><circle cx="3.5" cy="14" r="2.3" stroke="#cccccc" stroke-width="1.3" fill="none"/><circle cx="11" cy="5" r="2.3" stroke="#cccccc" stroke-width="1.3" fill="none"/><path d="M3.5 5.3 V11.7 M11 7.3 C11 10 6 10 4.5 12" stroke="#cccccc" stroke-width="1.3" fill="none"/></svg>
<div class="a" style="left:396.5px;top:1100.5px;line-height:27.5px;height:27.5px;color:#cccccc;font-size:14.6px;letter-spacing:-0.35px">A+K_G4*</div>
<svg style="left:463px;top:1106px;" width="17" height="16" viewBox="0 0 17 16"><path d="M2 8 A6.5 6.5 0 0 1 14 4.5 M15 8 A6.5 6.5 0 0 1 3 11.5 M14.5 1 V5 H10.5 M2.5 15 V11 H6.5" stroke="#cccccc" stroke-width="1.4" fill="none"/></svg>
<svg style="left:500px;top:1107px;" width="15" height="15" viewBox="0 0 15 15"><circle cx="7.5" cy="7.5" r="6.5" stroke="#cccccc" stroke-width="1.3" fill="none"/><path d="M4.8 4.8 L10.2 10.2 M10.2 4.8 L4.8 10.2" stroke="#cccccc" stroke-width="1.3"/></svg>
<div class="a" style="left:520px;top:1100.5px;line-height:27.5px;height:27.5px;color:#cccccc;font-size:15.6px">0</div>
<svg style="left:533px;top:1106px;" width="16" height="15" viewBox="0 0 16 15"><path d="M8 1 L15 14 H1 Z" stroke="#cccccc" stroke-width="1.3" fill="none" stroke-linejoin="round"/><path d="M8 5.5 V10 M8 11.5 V12.8" stroke="#cccccc" stroke-width="1.3"/></svg>
<div class="a" style="left:551px;top:1100.5px;line-height:27.5px;height:27.5px;color:#cccccc;font-size:15.6px">0</div>
<svg style="left:583px;top:1105px;" width="16" height="17" viewBox="0 0 16 17"><circle cx="8" cy="6" r="1.6" stroke="#cccccc" stroke-width="1.2" fill="none"/><path d="M8 7.5 L4.5 16 M8 7.5 L11.5 16 M5.5 13 H10.5 M3.5 2 A6 6 0 0 0 3.5 10 M12.5 2 A6 6 0 0 1 12.5 10 M1.5 0.5 A8.5 8.5 0 0 0 1.5 11.5 M14.5 0.5 A8.5 8.5 0 0 1 14.5 11.5" stroke="#cccccc" stroke-width="1.2" fill="none"/></svg>
<div class="a" style="left:603px;top:1100.5px;line-height:27.5px;height:27.5px;color:#cccccc;font-size:15.6px">0</div>
<svg style="left:1418px;top:1106px;" width="12" height="17" viewBox="0 0 12 17"><circle cx="6" cy="8.5" r="3.5" stroke="#cccccc" stroke-width="1.5" fill="none"/><path d="M6 0 V5 M6 12 V17" stroke="#cccccc" stroke-width="1.5"/></svg>
<div class="a" style="left:1438px;top:1100.5px;line-height:27.5px;height:27.5px;color:#cccccc;font-size:15px">尚未提交</div>
<div class="a" style="left:1516.5px;top:1100.5px;line-height:27.5px;height:27.5px;color:#cccccc;font-size:15.6px;letter-spacing:-0.3px">行 1266，列 22</div>
<div class="a" style="left:1640px;top:1100.5px;line-height:27.5px;height:27.5px;color:#cccccc;font-size:15.6px;letter-spacing:-0.2px">空格: 2</div>
<div class="a" style="left:1705px;top:1100.5px;line-height:27.5px;height:27.5px;color:#cccccc;font-size:15.6px;letter-spacing:-0.3px">UTF-8</div>
<div class="a" style="left:1764px;top:1100.5px;line-height:27.5px;height:27.5px;color:#cccccc;font-size:15.6px">LF</div>
<div class="a" style="left:1796px;top:1100.5px;line-height:27.5px;height:27.5px;color:#cccccc;font-size:15px;letter-spacing:-0.5px">{ }</div>
<div class="a" style="left:1821px;top:1100.5px;line-height:27.5px;height:27.5px;color:#cccccc;font-size:15px">纯文本</div>
<svg style="left:1883px;top:1104px;" width="21" height="20" viewBox="0 0 21 20"><path d="M3 15 H15 L13.5 12.5 V8.5 C13.5 5.5 11.5 3.5 9 3.5 C6.5 3.5 4.5 5.5 4.5 8.5 V12.5 Z M7 17 C7.5 18.5 10.5 18.5 11 17" stroke="#cccccc" stroke-width="1.4" fill="none"/><circle cx="15.5" cy="4" r="3.2" fill="#cccccc" stroke="#181818" stroke-width="1"/></svg>
<svg style="left:1818px;top:123px;" width="86" height="682" viewBox="0 0 86 682"><g fill="#a8a8a8" fill-opacity="0.42"><rect x="4.1" y="0.50" width="27.9" height="1.4"/><rect x="32.9" y="0.50" width="0.9" height="1.4"/><rect x="5.9" y="2.75" width="9.0" height="1.4"/><rect x="15.8" y="2.75" width="26.1" height="1.4"/><rect x="5.9" y="5.00" width="9.9" height="1.4"/><rect x="16.7" y="5.00" width="0.9" height="1.4"/><rect x="7.7" y="7.25" width="9.0" height="1.4"/><rect x="17.6" y="7.25" width="1.8" height="1.4"/><rect x="5.9" y="9.50" width="1.8" height="1.4"/><rect x="5.9" y="11.75" width="11.7" height="1.4"/><rect x="18.5" y="11.75" width="1.8" height="1.4"/><rect x="5.9" y="14.00" width="9.9" height="1.4"/><rect x="16.7" y="14.00" width="30.6" height="1.4"/><rect x="5.9" y="16.25" width="9.9" height="1.4"/><rect x="16.7" y="16.25" width="5.4" height="1.4"/><rect x="5.9" y="18.50" width="9.9" height="1.4"/><rect x="16.7" y="18.50" width="23.4" height="1.4"/><rect x="5.9" y="20.75" width="9.9" height="1.4"/><rect x="16.7" y="20.75" width="6.3" height="1.4"/><rect x="5.9" y="23.00" width="10.8" height="1.4"/><rect x="17.6" y="23.00" width="20.7" height="1.4"/><rect x="5.9" y="25.25" width="15.3" height="1.4"/><rect x="22.1" y="25.25" width="2.7" height="1.4"/><rect x="4.1" y="27.50" width="1.8" height="1.4"/><rect x="4.1" y="29.75" width="21.6" height="1.4"/><rect x="26.6" y="29.75" width="0.9" height="1.4"/><rect x="5.9" y="32.00" width="9.0" height="1.4"/><rect x="15.8" y="32.00" width="20.7" height="1.4"/><rect x="37.4" y="32.00" width="1.8" height="1.4"/><rect x="40.1" y="32.00" width="6.3" height="1.4"/><rect x="48.2" y="32.00" width="1.8" height="1.4"/><rect x="50.9" y="32.00" width="4.5" height="1.4"/><rect x="56.3" y="32.00" width="0.9" height="1.4"/><rect x="58.1" y="32.00" width="1.8" height="1.4"/><rect x="60.8" y="32.00" width="0.9" height="1.4"/><rect x="62.6" y="32.00" width="3.6" height="1.4"/><rect x="67.1" y="32.00" width="0.9" height="1.4"/><rect x="68.9" y="32.00" width="2.7" height="1.4"/><rect x="72.5" y="32.00" width="0.9" height="1.4"/><rect x="74.3" y="32.00" width="0.9" height="1.4"/><rect x="77.0" y="32.00" width="0.9" height="1.4"/><rect x="78.8" y="32.00" width="5.2" height="1.4"/><rect x="5.9" y="34.25" width="9.9" height="1.4"/><rect x="16.7" y="34.25" width="0.9" height="1.4"/><rect x="7.7" y="36.50" width="9.0" height="1.4"/><rect x="17.6" y="36.50" width="1.8" height="1.4"/><rect x="5.9" y="38.75" width="1.8" height="1.4"/><rect x="5.9" y="41.00" width="11.7" height="1.4"/><rect x="18.5" y="41.00" width="1.8" height="1.4"/><rect x="5.9" y="43.25" width="9.9" height="1.4"/><rect x="16.7" y="43.25" width="37.8" height="1.4"/><rect x="5.9" y="45.50" width="9.9" height="1.4"/><rect x="16.7" y="45.50" width="5.4" height="1.4"/><rect x="5.9" y="47.75" width="9.9" height="1.4"/><rect x="16.7" y="47.75" width="23.4" height="1.4"/><rect x="5.9" y="50.00" width="9.9" height="1.4"/><rect x="16.7" y="50.00" width="6.3" height="1.4"/><rect x="5.9" y="52.25" width="10.8" height="1.4"/><rect x="17.6" y="52.25" width="20.7" height="1.4"/><rect x="5.9" y="54.50" width="15.3" height="1.4"/><rect x="22.1" y="54.50" width="2.7" height="1.4"/><rect x="4.1" y="56.75" width="1.8" height="1.4"/><rect x="4.1" y="59.00" width="20.7" height="1.4"/><rect x="25.7" y="59.00" width="0.9" height="1.4"/><rect x="5.9" y="61.25" width="9.0" height="1.4"/><rect x="15.8" y="61.25" width="20.7" height="1.4"/><rect x="37.4" y="61.25" width="1.8" height="1.4"/><rect x="40.1" y="61.25" width="6.3" height="1.4"/><rect x="48.2" y="61.25" width="1.8" height="1.4"/><rect x="50.9" y="61.25" width="4.5" height="1.4"/><rect x="56.3" y="61.25" width="0.9" height="1.4"/><rect x="58.1" y="61.25" width="1.8" height="1.4"/><rect x="60.8" y="61.25" width="0.9" height="1.4"/><rect x="62.6" y="61.25" width="3.6" height="1.4"/><rect x="67.1" y="61.25" width="0.9" height="1.4"/><rect x="68.9" y="61.25" width="2.7" height="1.4"/><rect x="72.5" y="61.25" width="0.9" height="1.4"/><rect x="74.3" y="61.25" width="0.9" height="1.4"/><rect x="77.0" y="61.25" width="0.9" height="1.4"/><rect x="78.8" y="61.25" width="5.2" height="1.4"/><rect x="5.9" y="63.50" width="9.9" height="1.4"/><rect x="16.7" y="63.50" width="0.9" height="1.4"/><rect x="7.7" y="65.75" width="9.0" height="1.4"/><rect x="17.6" y="65.75" width="1.8" height="1.4"/><rect x="5.9" y="68.00" width="1.8" height="1.4"/><rect x="5.9" y="70.25" width="11.7" height="1.4"/><rect x="18.5" y="70.25" width="1.8" height="1.4"/><rect x="5.9" y="72.50" width="9.9" height="1.4"/><rect x="16.7" y="72.50" width="31.5" height="1.4"/><rect x="5.9" y="74.75" width="9.9" height="1.4"/><rect x="16.7" y="74.75" width="5.4" height="1.4"/><rect x="5.9" y="77.00" width="9.9" height="1.4"/><rect x="16.7" y="77.00" width="23.4" height="1.4"/><rect x="5.9" y="79.25" width="9.9" height="1.4"/><rect x="16.7" y="79.25" width="6.3" height="1.4"/><rect x="5.9" y="81.50" width="10.8" height="1.4"/><rect x="17.6" y="81.50" width="20.7" height="1.4"/><rect x="5.9" y="83.75" width="15.3" height="1.4"/><rect x="22.1" y="83.75" width="2.7" height="1.4"/><rect x="4.1" y="86.00" width="1.8" height="1.4"/><rect x="4.1" y="88.25" width="19.8" height="1.4"/><rect x="24.8" y="88.25" width="0.9" height="1.4"/><rect x="5.9" y="90.50" width="9.0" height="1.4"/><rect x="15.8" y="90.50" width="26.1" height="1.4"/><rect x="5.9" y="92.75" width="9.9" height="1.4"/><rect x="16.7" y="92.75" width="0.9" height="1.4"/><rect x="7.7" y="95.00" width="9.0" height="1.4"/><rect x="17.6" y="95.00" width="1.8" height="1.4"/><rect x="5.9" y="97.25" width="1.8" height="1.4"/><rect x="5.9" y="99.50" width="11.7" height="1.4"/><rect x="18.5" y="99.50" width="1.8" height="1.4"/><rect x="5.9" y="101.75" width="9.9" height="1.4"/><rect x="16.7" y="101.75" width="33.3" height="1.4"/><rect x="5.9" y="104.00" width="9.9" height="1.4"/><rect x="16.7" y="104.00" width="5.4" height="1.4"/><rect x="5.9" y="106.25" width="10.8" height="1.4"/><rect x="17.6" y="106.25" width="20.7" height="1.4"/><rect x="5.9" y="108.50" width="15.3" height="1.4"/><rect x="22.1" y="108.50" width="2.7" height="1.4"/><rect x="4.1" y="110.75" width="1.8" height="1.4"/><rect x="4.1" y="113.00" width="19.8" height="1.4"/><rect x="24.8" y="113.00" width="0.9" height="1.4"/><rect x="5.9" y="115.25" width="9.0" height="1.4"/><rect x="15.8" y="115.25" width="26.1" height="1.4"/><rect x="5.9" y="117.50" width="9.9" height="1.4"/><rect x="16.7" y="117.50" width="0.9" height="1.4"/><rect x="7.7" y="119.75" width="9.0" height="1.4"/><rect x="17.6" y="119.75" width="1.8" height="1.4"/><rect x="5.9" y="122.00" width="1.8" height="1.4"/><rect x="5.9" y="124.25" width="11.7" height="1.4"/><rect x="18.5" y="124.25" width="1.8" height="1.4"/><rect x="5.9" y="126.50" width="9.9" height="1.4"/><rect x="16.7" y="126.50" width="33.3" height="1.4"/><rect x="5.9" y="128.75" width="9.9" height="1.4"/><rect x="16.7" y="128.75" width="5.4" height="1.4"/><rect x="5.9" y="131.00" width="9.9" height="1.4"/><rect x="16.7" y="131.00" width="23.4" height="1.4"/><rect x="5.9" y="133.25" width="9.9" height="1.4"/><rect x="16.7" y="133.25" width="6.3" height="1.4"/><rect x="5.9" y="135.50" width="10.8" height="1.4"/><rect x="17.6" y="135.50" width="20.7" height="1.4"/><rect x="5.9" y="137.75" width="15.3" height="1.4"/><rect x="22.1" y="137.75" width="2.7" height="1.4"/><rect x="4.1" y="140.00" width="1.8" height="1.4"/><rect x="4.1" y="142.25" width="22.5" height="1.4"/><rect x="27.5" y="142.25" width="0.9" height="1.4"/><rect x="5.9" y="144.50" width="9.0" height="1.4"/><rect x="15.8" y="144.50" width="20.7" height="1.4"/><rect x="37.4" y="144.50" width="1.8" height="1.4"/><rect x="40.1" y="144.50" width="6.3" height="1.4"/><rect x="48.2" y="144.50" width="1.8" height="1.4"/><rect x="50.9" y="144.50" width="4.5" height="1.4"/><rect x="56.3" y="144.50" width="0.9" height="1.4"/><rect x="58.1" y="144.50" width="1.8" height="1.4"/><rect x="60.8" y="144.50" width="0.9" height="1.4"/><rect x="62.6" y="144.50" width="3.6" height="1.4"/><rect x="67.1" y="144.50" width="0.9" height="1.4"/><rect x="68.9" y="144.50" width="2.7" height="1.4"/><rect x="72.5" y="144.50" width="0.9" height="1.4"/><rect x="74.3" y="144.50" width="0.9" height="1.4"/><rect x="77.0" y="144.50" width="0.9" height="1.4"/><rect x="78.8" y="144.50" width="5.2" height="1.4"/><rect x="5.9" y="146.75" width="9.9" height="1.4"/><rect x="16.7" y="146.75" width="0.9" height="1.4"/><rect x="7.7" y="149.00" width="9.0" height="1.4"/><rect x="17.6" y="149.00" width="1.8" height="1.4"/><rect x="5.9" y="151.25" width="1.8" height="1.4"/><rect x="5.9" y="153.50" width="11.7" height="1.4"/><rect x="18.5" y="153.50" width="1.8" height="1.4"/><rect x="5.9" y="155.75" width="9.9" height="1.4"/><rect x="16.7" y="155.75" width="31.5" height="1.4"/><rect x="5.9" y="158.00" width="9.9" height="1.4"/><rect x="16.7" y="158.00" width="5.4" height="1.4"/><rect x="5.9" y="160.25" width="9.9" height="1.4"/><rect x="16.7" y="160.25" width="23.4" height="1.4"/><rect x="5.9" y="162.50" width="9.9" height="1.4"/><rect x="16.7" y="162.50" width="6.3" height="1.4"/><rect x="5.9" y="164.75" width="10.8" height="1.4"/><rect x="17.6" y="164.75" width="20.7" height="1.4"/><rect x="5.9" y="167.00" width="15.3" height="1.4"/><rect x="22.1" y="167.00" width="2.7" height="1.4"/><rect x="4.1" y="169.25" width="1.8" height="1.4"/><rect x="4.1" y="171.50" width="23.4" height="1.4"/><rect x="28.4" y="171.50" width="0.9" height="1.4"/><rect x="5.9" y="173.75" width="9.0" height="1.4"/><rect x="15.8" y="173.75" width="20.7" height="1.4"/><rect x="37.4" y="173.75" width="1.8" height="1.4"/><rect x="40.1" y="173.75" width="6.3" height="1.4"/><rect x="48.2" y="173.75" width="1.8" height="1.4"/><rect x="50.9" y="173.75" width="4.5" height="1.4"/><rect x="56.3" y="173.75" width="0.9" height="1.4"/><rect x="58.1" y="173.75" width="1.8" height="1.4"/><rect x="60.8" y="173.75" width="0.9" height="1.4"/><rect x="62.6" y="173.75" width="3.6" height="1.4"/><rect x="67.1" y="173.75" width="0.9" height="1.4"/><rect x="68.9" y="173.75" width="2.7" height="1.4"/><rect x="72.5" y="173.75" width="0.9" height="1.4"/><rect x="74.3" y="173.75" width="0.9" height="1.4"/><rect x="77.0" y="173.75" width="0.9" height="1.4"/><rect x="78.8" y="173.75" width="5.2" height="1.4"/><rect x="5.9" y="176.00" width="9.9" height="1.4"/><rect x="16.7" y="176.00" width="0.9" height="1.4"/><rect x="7.7" y="178.25" width="9.0" height="1.4"/><rect x="17.6" y="178.25" width="1.8" height="1.4"/><rect x="5.9" y="180.50" width="1.8" height="1.4"/><rect x="5.9" y="182.75" width="11.7" height="1.4"/><rect x="18.5" y="182.75" width="1.8" height="1.4"/><rect x="5.9" y="185.00" width="9.9" height="1.4"/><rect x="16.7" y="185.00" width="33.3" height="1.4"/><rect x="5.9" y="187.25" width="9.9" height="1.4"/><rect x="16.7" y="187.25" width="5.4" height="1.4"/><rect x="5.9" y="189.50" width="9.9" height="1.4"/><rect x="16.7" y="189.50" width="23.4" height="1.4"/><rect x="5.9" y="191.75" width="9.9" height="1.4"/><rect x="16.7" y="191.75" width="6.3" height="1.4"/><rect x="5.9" y="194.00" width="10.8" height="1.4"/><rect x="17.6" y="194.00" width="20.7" height="1.4"/><rect x="5.9" y="196.25" width="15.3" height="1.4"/><rect x="22.1" y="196.25" width="2.7" height="1.4"/><rect x="4.1" y="198.50" width="1.8" height="1.4"/><rect x="4.1" y="200.75" width="20.7" height="1.4"/><rect x="25.7" y="200.75" width="0.9" height="1.4"/><rect x="5.9" y="203.00" width="9.0" height="1.4"/><rect x="15.8" y="203.00" width="26.1" height="1.4"/><rect x="5.9" y="205.25" width="11.7" height="1.4"/><rect x="18.5" y="205.25" width="1.8" height="1.4"/><rect x="5.9" y="207.50" width="9.9" height="1.4"/><rect x="16.7" y="207.50" width="36.9" height="1.4"/><rect x="5.9" y="209.75" width="9.9" height="1.4"/><rect x="16.7" y="209.75" width="5.4" height="1.4"/><rect x="5.9" y="212.00" width="10.8" height="1.4"/><rect x="17.6" y="212.00" width="20.7" height="1.4"/><rect x="5.9" y="214.25" width="15.3" height="1.4"/><rect x="22.1" y="214.25" width="2.7" height="1.4"/><rect x="4.1" y="216.50" width="1.8" height="1.4"/><rect x="4.1" y="218.75" width="30.6" height="1.4"/><rect x="35.6" y="218.75" width="0.9" height="1.4"/><rect x="5.9" y="221.00" width="9.0" height="1.4"/><rect x="15.8" y="221.00" width="26.1" height="1.4"/><rect x="5.9" y="223.25" width="9.9" height="1.4"/><rect x="16.7" y="223.25" width="0.9" height="1.4"/><rect x="7.7" y="225.50" width="9.0" height="1.4"/><rect x="17.6" y="225.50" width="1.8" height="1.4"/><rect x="5.9" y="227.75" width="1.8" height="1.4"/><rect x="5.9" y="230.00" width="11.7" height="1.4"/><rect x="18.5" y="230.00" width="1.8" height="1.4"/><rect x="5.9" y="232.25" width="9.9" height="1.4"/><rect x="16.7" y="232.25" width="36.9" height="1.4"/><rect x="5.9" y="234.50" width="9.9" height="1.4"/><rect x="16.7" y="234.50" width="5.4" height="1.4"/><rect x="5.9" y="236.75" width="9.9" height="1.4"/><rect x="16.7" y="236.75" width="23.4" height="1.4"/><rect x="5.9" y="239.00" width="9.9" height="1.4"/><rect x="16.7" y="239.00" width="6.3" height="1.4"/><rect x="5.9" y="241.25" width="10.8" height="1.4"/><rect x="17.6" y="241.25" width="20.7" height="1.4"/><rect x="5.9" y="243.50" width="15.3" height="1.4"/><rect x="22.1" y="243.50" width="2.7" height="1.4"/><rect x="4.1" y="245.75" width="1.8" height="1.4"/><rect x="4.1" y="248.00" width="25.2" height="1.4"/><rect x="30.2" y="248.00" width="0.9" height="1.4"/><rect x="5.9" y="250.25" width="9.0" height="1.4"/><rect x="15.8" y="250.25" width="26.1" height="1.4"/><rect x="5.9" y="252.50" width="11.7" height="1.4"/><rect x="18.5" y="252.50" width="1.8" height="1.4"/><rect x="5.9" y="254.75" width="9.9" height="1.4"/><rect x="16.7" y="254.75" width="33.3" height="1.4"/><rect x="5.9" y="257.00" width="9.9" height="1.4"/><rect x="16.7" y="257.00" width="5.4" height="1.4"/><rect x="5.9" y="259.25" width="9.9" height="1.4"/><rect x="16.7" y="259.25" width="23.4" height="1.4"/><rect x="5.9" y="261.50" width="9.9" height="1.4"/><rect x="16.7" y="261.50" width="6.3" height="1.4"/><rect x="5.9" y="263.75" width="10.8" height="1.4"/><rect x="17.6" y="263.75" width="20.7" height="1.4"/><rect x="5.9" y="266.00" width="15.3" height="1.4"/><rect x="22.1" y="266.00" width="2.7" height="1.4"/><rect x="4.1" y="268.25" width="1.8" height="1.4"/><rect x="4.1" y="270.50" width="27.0" height="1.4"/><rect x="32.0" y="270.50" width="0.9" height="1.4"/><rect x="5.9" y="272.75" width="9.0" height="1.4"/><rect x="15.8" y="272.75" width="20.7" height="1.4"/><rect x="37.4" y="272.75" width="1.8" height="1.4"/><rect x="40.1" y="272.75" width="6.3" height="1.4"/><rect x="48.2" y="272.75" width="1.8" height="1.4"/><rect x="50.9" y="272.75" width="4.5" height="1.4"/><rect x="56.3" y="272.75" width="0.9" height="1.4"/><rect x="58.1" y="272.75" width="1.8" height="1.4"/><rect x="60.8" y="272.75" width="0.9" height="1.4"/><rect x="62.6" y="272.75" width="3.6" height="1.4"/><rect x="67.1" y="272.75" width="0.9" height="1.4"/><rect x="68.9" y="272.75" width="2.7" height="1.4"/><rect x="72.5" y="272.75" width="0.9" height="1.4"/><rect x="74.3" y="272.75" width="0.9" height="1.4"/><rect x="77.0" y="272.75" width="0.9" height="1.4"/><rect x="78.8" y="272.75" width="5.2" height="1.4"/><rect x="5.9" y="275.00" width="11.7" height="1.4"/><rect x="18.5" y="275.00" width="1.8" height="1.4"/><rect x="5.9" y="277.25" width="9.9" height="1.4"/><rect x="16.7" y="277.25" width="40.5" height="1.4"/><rect x="5.9" y="279.50" width="9.9" height="1.4"/><rect x="16.7" y="279.50" width="5.4" height="1.4"/><rect x="5.9" y="281.75" width="9.9" height="1.4"/><rect x="16.7" y="281.75" width="23.4" height="1.4"/><rect x="5.9" y="284.00" width="9.9" height="1.4"/><rect x="16.7" y="284.00" width="6.3" height="1.4"/><rect x="5.9" y="286.25" width="10.8" height="1.4"/><rect x="17.6" y="286.25" width="20.7" height="1.4"/><rect x="5.9" y="288.50" width="15.3" height="1.4"/><rect x="22.1" y="288.50" width="2.7" height="1.4"/><rect x="4.1" y="290.75" width="1.8" height="1.4"/><rect x="4.1" y="293.00" width="20.7" height="1.4"/><rect x="25.7" y="293.00" width="0.9" height="1.4"/><rect x="5.9" y="295.25" width="9.0" height="1.4"/><rect x="15.8" y="295.25" width="20.7" height="1.4"/><rect x="37.4" y="295.25" width="1.8" height="1.4"/><rect x="40.1" y="295.25" width="6.3" height="1.4"/><rect x="48.2" y="295.25" width="1.8" height="1.4"/><rect x="50.9" y="295.25" width="4.5" height="1.4"/><rect x="56.3" y="295.25" width="0.9" height="1.4"/><rect x="58.1" y="295.25" width="1.8" height="1.4"/><rect x="60.8" y="295.25" width="0.9" height="1.4"/><rect x="62.6" y="295.25" width="3.6" height="1.4"/><rect x="67.1" y="295.25" width="0.9" height="1.4"/><rect x="68.9" y="295.25" width="2.7" height="1.4"/><rect x="72.5" y="295.25" width="0.9" height="1.4"/><rect x="74.3" y="295.25" width="0.9" height="1.4"/><rect x="77.0" y="295.25" width="0.9" height="1.4"/><rect x="78.8" y="295.25" width="5.2" height="1.4"/><rect x="5.9" y="297.50" width="9.9" height="1.4"/><rect x="16.7" y="297.50" width="0.9" height="1.4"/><rect x="7.7" y="299.75" width="9.0" height="1.4"/><rect x="17.6" y="299.75" width="1.8" height="1.4"/><rect x="5.9" y="302.00" width="1.8" height="1.4"/><rect x="5.9" y="304.25" width="11.7" height="1.4"/><rect x="18.5" y="304.25" width="1.8" height="1.4"/><rect x="5.9" y="306.50" width="9.9" height="1.4"/><rect x="16.7" y="306.50" width="41.4" height="1.4"/><rect x="5.9" y="308.75" width="9.9" height="1.4"/><rect x="16.7" y="308.75" width="5.4" height="1.4"/><rect x="5.9" y="311.00" width="9.9" height="1.4"/><rect x="16.7" y="311.00" width="23.4" height="1.4"/><rect x="5.9" y="313.25" width="9.9" height="1.4"/><rect x="16.7" y="313.25" width="6.3" height="1.4"/><rect x="5.9" y="315.50" width="10.8" height="1.4"/><rect x="17.6" y="315.50" width="20.7" height="1.4"/><rect x="5.9" y="317.75" width="15.3" height="1.4"/><rect x="22.1" y="317.75" width="2.7" height="1.4"/><rect x="4.1" y="320.00" width="1.8" height="1.4"/><rect x="4.1" y="322.25" width="32.4" height="1.4"/><rect x="37.4" y="322.25" width="0.9" height="1.4"/><rect x="5.9" y="324.50" width="9.0" height="1.4"/><rect x="15.8" y="324.50" width="20.7" height="1.4"/><rect x="37.4" y="324.50" width="1.8" height="1.4"/><rect x="40.1" y="324.50" width="6.3" height="1.4"/><rect x="48.2" y="324.50" width="1.8" height="1.4"/><rect x="50.9" y="324.50" width="4.5" height="1.4"/><rect x="56.3" y="324.50" width="0.9" height="1.4"/><rect x="58.1" y="324.50" width="1.8" height="1.4"/><rect x="60.8" y="324.50" width="0.9" height="1.4"/><rect x="62.6" y="324.50" width="3.6" height="1.4"/><rect x="67.1" y="324.50" width="0.9" height="1.4"/><rect x="68.9" y="324.50" width="2.7" height="1.4"/><rect x="72.5" y="324.50" width="0.9" height="1.4"/><rect x="74.3" y="324.50" width="0.9" height="1.4"/><rect x="77.0" y="324.50" width="0.9" height="1.4"/><rect x="78.8" y="324.50" width="5.2" height="1.4"/><rect x="5.9" y="326.75" width="11.7" height="1.4"/><rect x="18.5" y="326.75" width="1.8" height="1.4"/><rect x="5.9" y="329.00" width="9.9" height="1.4"/><rect x="16.7" y="329.00" width="31.5" height="1.4"/><rect x="5.9" y="331.25" width="9.9" height="1.4"/><rect x="16.7" y="331.25" width="5.4" height="1.4"/><rect x="5.9" y="333.50" width="10.8" height="1.4"/><rect x="17.6" y="333.50" width="20.7" height="1.4"/><rect x="5.9" y="335.75" width="15.3" height="1.4"/><rect x="22.1" y="335.75" width="2.7" height="1.4"/><rect x="4.1" y="338.00" width="1.8" height="1.4"/><rect x="4.1" y="340.25" width="27.9" height="1.4"/><rect x="32.9" y="340.25" width="0.9" height="1.4"/><rect x="5.9" y="342.50" width="9.0" height="1.4"/><rect x="15.8" y="342.50" width="20.7" height="1.4"/><rect x="37.4" y="342.50" width="1.8" height="1.4"/><rect x="40.1" y="342.50" width="6.3" height="1.4"/><rect x="48.2" y="342.50" width="1.8" height="1.4"/><rect x="50.9" y="342.50" width="4.5" height="1.4"/><rect x="56.3" y="342.50" width="0.9" height="1.4"/><rect x="58.1" y="342.50" width="1.8" height="1.4"/><rect x="60.8" y="342.50" width="0.9" height="1.4"/><rect x="62.6" y="342.50" width="3.6" height="1.4"/><rect x="67.1" y="342.50" width="0.9" height="1.4"/><rect x="68.9" y="342.50" width="2.7" height="1.4"/><rect x="72.5" y="342.50" width="0.9" height="1.4"/><rect x="74.3" y="342.50" width="0.9" height="1.4"/><rect x="77.0" y="342.50" width="0.9" height="1.4"/><rect x="78.8" y="342.50" width="5.2" height="1.4"/><rect x="5.9" y="344.75" width="9.9" height="1.4"/><rect x="16.7" y="344.75" width="0.9" height="1.4"/><rect x="7.7" y="347.00" width="9.0" height="1.4"/><rect x="17.6" y="347.00" width="1.8" height="1.4"/><rect x="5.9" y="349.25" width="1.8" height="1.4"/><rect x="5.9" y="351.50" width="11.7" height="1.4"/><rect x="18.5" y="351.50" width="1.8" height="1.4"/><rect x="5.9" y="353.75" width="9.9" height="1.4"/><rect x="16.7" y="353.75" width="36.9" height="1.4"/><rect x="5.9" y="356.00" width="9.9" height="1.4"/><rect x="16.7" y="356.00" width="5.4" height="1.4"/><rect x="5.9" y="358.25" width="9.9" height="1.4"/><rect x="16.7" y="358.25" width="23.4" height="1.4"/><rect x="5.9" y="360.50" width="9.9" height="1.4"/><rect x="16.7" y="360.50" width="6.3" height="1.4"/><rect x="5.9" y="362.75" width="10.8" height="1.4"/><rect x="17.6" y="362.75" width="20.7" height="1.4"/><rect x="5.9" y="365.00" width="15.3" height="1.4"/><rect x="22.1" y="365.00" width="2.7" height="1.4"/><rect x="4.1" y="367.25" width="1.8" height="1.4"/><rect x="4.1" y="369.50" width="31.5" height="1.4"/><rect x="36.5" y="369.50" width="0.9" height="1.4"/><rect x="5.9" y="371.75" width="9.0" height="1.4"/><rect x="15.8" y="371.75" width="20.7" height="1.4"/><rect x="37.4" y="371.75" width="1.8" height="1.4"/><rect x="40.1" y="371.75" width="6.3" height="1.4"/><rect x="48.2" y="371.75" width="1.8" height="1.4"/><rect x="50.9" y="371.75" width="4.5" height="1.4"/><rect x="56.3" y="371.75" width="0.9" height="1.4"/><rect x="58.1" y="371.75" width="1.8" height="1.4"/><rect x="60.8" y="371.75" width="0.9" height="1.4"/><rect x="62.6" y="371.75" width="3.6" height="1.4"/><rect x="67.1" y="371.75" width="0.9" height="1.4"/><rect x="68.9" y="371.75" width="2.7" height="1.4"/><rect x="72.5" y="371.75" width="0.9" height="1.4"/><rect x="74.3" y="371.75" width="0.9" height="1.4"/><rect x="77.0" y="371.75" width="0.9" height="1.4"/><rect x="78.8" y="371.75" width="5.2" height="1.4"/><rect x="5.9" y="374.00" width="9.9" height="1.4"/><rect x="16.7" y="374.00" width="0.9" height="1.4"/><rect x="7.7" y="376.25" width="9.0" height="1.4"/><rect x="17.6" y="376.25" width="1.8" height="1.4"/><rect x="5.9" y="378.50" width="1.8" height="1.4"/><rect x="5.9" y="380.75" width="11.7" height="1.4"/><rect x="18.5" y="380.75" width="1.8" height="1.4"/><rect x="5.9" y="383.00" width="9.9" height="1.4"/><rect x="16.7" y="383.00" width="34.2" height="1.4"/><rect x="5.9" y="385.25" width="9.9" height="1.4"/><rect x="16.7" y="385.25" width="5.4" height="1.4"/><rect x="5.9" y="387.50" width="9.9" height="1.4"/><rect x="16.7" y="387.50" width="23.4" height="1.4"/><rect x="5.9" y="389.75" width="9.9" height="1.4"/><rect x="16.7" y="389.75" width="6.3" height="1.4"/><rect x="5.9" y="392.00" width="10.8" height="1.4"/><rect x="17.6" y="392.00" width="20.7" height="1.4"/><rect x="5.9" y="394.25" width="15.3" height="1.4"/><rect x="22.1" y="394.25" width="2.7" height="1.4"/><rect x="4.1" y="396.50" width="1.8" height="1.4"/><rect x="4.1" y="398.75" width="20.7" height="1.4"/><rect x="25.7" y="398.75" width="0.9" height="1.4"/><rect x="5.9" y="401.00" width="9.0" height="1.4"/><rect x="15.8" y="401.00" width="20.7" height="1.4"/><rect x="37.4" y="401.00" width="1.8" height="1.4"/><rect x="40.1" y="401.00" width="6.3" height="1.4"/><rect x="48.2" y="401.00" width="1.8" height="1.4"/><rect x="50.9" y="401.00" width="4.5" height="1.4"/><rect x="56.3" y="401.00" width="0.9" height="1.4"/><rect x="58.1" y="401.00" width="1.8" height="1.4"/><rect x="60.8" y="401.00" width="0.9" height="1.4"/><rect x="62.6" y="401.00" width="3.6" height="1.4"/><rect x="67.1" y="401.00" width="0.9" height="1.4"/><rect x="68.9" y="401.00" width="2.7" height="1.4"/><rect x="72.5" y="401.00" width="0.9" height="1.4"/><rect x="74.3" y="401.00" width="0.9" height="1.4"/><rect x="77.0" y="401.00" width="0.9" height="1.4"/><rect x="78.8" y="401.00" width="5.2" height="1.4"/><rect x="5.9" y="403.25" width="11.7" height="1.4"/><rect x="18.5" y="403.25" width="1.8" height="1.4"/><rect x="5.9" y="405.50" width="9.9" height="1.4"/><rect x="16.7" y="405.50" width="39.6" height="1.4"/><rect x="5.9" y="407.75" width="9.9" height="1.4"/><rect x="16.7" y="407.75" width="5.4" height="1.4"/><rect x="5.9" y="410.00" width="9.9" height="1.4"/><rect x="16.7" y="410.00" width="23.4" height="1.4"/><rect x="5.9" y="412.25" width="9.9" height="1.4"/><rect x="16.7" y="412.25" width="6.3" height="1.4"/><rect x="5.9" y="414.50" width="10.8" height="1.4"/><rect x="17.6" y="414.50" width="20.7" height="1.4"/><rect x="5.9" y="416.75" width="15.3" height="1.4"/><rect x="22.1" y="416.75" width="2.7" height="1.4"/><rect x="4.1" y="419.00" width="1.8" height="1.4"/><rect x="4.1" y="421.25" width="31.5" height="1.4"/><rect x="36.5" y="421.25" width="0.9" height="1.4"/><rect x="5.9" y="423.50" width="9.0" height="1.4"/><rect x="15.8" y="423.50" width="20.7" height="1.4"/><rect x="37.4" y="423.50" width="1.8" height="1.4"/><rect x="40.1" y="423.50" width="6.3" height="1.4"/><rect x="48.2" y="423.50" width="1.8" height="1.4"/><rect x="50.9" y="423.50" width="4.5" height="1.4"/><rect x="56.3" y="423.50" width="0.9" height="1.4"/><rect x="58.1" y="423.50" width="1.8" height="1.4"/><rect x="60.8" y="423.50" width="0.9" height="1.4"/><rect x="62.6" y="423.50" width="3.6" height="1.4"/><rect x="67.1" y="423.50" width="0.9" height="1.4"/><rect x="68.9" y="423.50" width="2.7" height="1.4"/><rect x="72.5" y="423.50" width="0.9" height="1.4"/><rect x="74.3" y="423.50" width="0.9" height="1.4"/><rect x="77.0" y="423.50" width="0.9" height="1.4"/><rect x="78.8" y="423.50" width="5.2" height="1.4"/><rect x="5.9" y="425.75" width="9.9" height="1.4"/><rect x="16.7" y="425.75" width="0.9" height="1.4"/><rect x="7.7" y="428.00" width="9.0" height="1.4"/><rect x="17.6" y="428.00" width="1.8" height="1.4"/><rect x="5.9" y="430.25" width="1.8" height="1.4"/><rect x="5.9" y="432.50" width="11.7" height="1.4"/><rect x="18.5" y="432.50" width="1.8" height="1.4"/><rect x="5.9" y="434.75" width="9.9" height="1.4"/><rect x="16.7" y="434.75" width="39.6" height="1.4"/><rect x="5.9" y="437.00" width="9.9" height="1.4"/><rect x="16.7" y="437.00" width="5.4" height="1.4"/><rect x="5.9" y="439.25" width="9.9" height="1.4"/><rect x="16.7" y="439.25" width="23.4" height="1.4"/><rect x="5.9" y="441.50" width="9.9" height="1.4"/><rect x="16.7" y="441.50" width="6.3" height="1.4"/><rect x="5.9" y="443.75" width="10.8" height="1.4"/><rect x="17.6" y="443.75" width="20.7" height="1.4"/><rect x="5.9" y="446.00" width="15.3" height="1.4"/><rect x="22.1" y="446.00" width="2.7" height="1.4"/><rect x="4.1" y="448.25" width="1.8" height="1.4"/><rect x="4.1" y="450.50" width="31.5" height="1.4"/><rect x="36.5" y="450.50" width="0.9" height="1.4"/><rect x="5.9" y="452.75" width="9.0" height="1.4"/><rect x="15.8" y="452.75" width="20.7" height="1.4"/><rect x="37.4" y="452.75" width="1.8" height="1.4"/><rect x="40.1" y="452.75" width="6.3" height="1.4"/><rect x="48.2" y="452.75" width="1.8" height="1.4"/><rect x="50.9" y="452.75" width="4.5" height="1.4"/><rect x="56.3" y="452.75" width="0.9" height="1.4"/><rect x="58.1" y="452.75" width="1.8" height="1.4"/><rect x="60.8" y="452.75" width="0.9" height="1.4"/><rect x="62.6" y="452.75" width="3.6" height="1.4"/><rect x="67.1" y="452.75" width="0.9" height="1.4"/><rect x="68.9" y="452.75" width="2.7" height="1.4"/><rect x="72.5" y="452.75" width="0.9" height="1.4"/><rect x="74.3" y="452.75" width="0.9" height="1.4"/><rect x="77.0" y="452.75" width="0.9" height="1.4"/><rect x="78.8" y="452.75" width="5.2" height="1.4"/><rect x="5.9" y="455.00" width="11.7" height="1.4"/><rect x="18.5" y="455.00" width="1.8" height="1.4"/><rect x="5.9" y="457.25" width="9.9" height="1.4"/><rect x="16.7" y="457.25" width="36.9" height="1.4"/><rect x="5.9" y="459.50" width="9.9" height="1.4"/><rect x="16.7" y="459.50" width="5.4" height="1.4"/><rect x="5.9" y="461.75" width="9.9" height="1.4"/><rect x="16.7" y="461.75" width="23.4" height="1.4"/><rect x="5.9" y="464.00" width="9.9" height="1.4"/><rect x="16.7" y="464.00" width="6.3" height="1.4"/><rect x="5.9" y="466.25" width="10.8" height="1.4"/><rect x="17.6" y="466.25" width="20.7" height="1.4"/><rect x="5.9" y="468.50" width="15.3" height="1.4"/><rect x="22.1" y="468.50" width="2.7" height="1.4"/><rect x="4.1" y="470.75" width="1.8" height="1.4"/><rect x="4.1" y="473.00" width="27.0" height="1.4"/><rect x="32.0" y="473.00" width="0.9" height="1.4"/><rect x="5.9" y="475.25" width="9.0" height="1.4"/><rect x="15.8" y="475.25" width="20.7" height="1.4"/><rect x="37.4" y="475.25" width="1.8" height="1.4"/><rect x="40.1" y="475.25" width="6.3" height="1.4"/><rect x="48.2" y="475.25" width="1.8" height="1.4"/><rect x="50.9" y="475.25" width="4.5" height="1.4"/><rect x="56.3" y="475.25" width="0.9" height="1.4"/><rect x="58.1" y="475.25" width="1.8" height="1.4"/><rect x="60.8" y="475.25" width="0.9" height="1.4"/><rect x="62.6" y="475.25" width="3.6" height="1.4"/><rect x="67.1" y="475.25" width="0.9" height="1.4"/><rect x="68.9" y="475.25" width="2.7" height="1.4"/><rect x="72.5" y="475.25" width="0.9" height="1.4"/><rect x="74.3" y="475.25" width="0.9" height="1.4"/><rect x="77.0" y="475.25" width="0.9" height="1.4"/><rect x="78.8" y="475.25" width="5.2" height="1.4"/><rect x="5.9" y="477.50" width="9.9" height="1.4"/><rect x="16.7" y="477.50" width="0.9" height="1.4"/><rect x="7.7" y="479.75" width="9.0" height="1.4"/><rect x="17.6" y="479.75" width="1.8" height="1.4"/><rect x="5.9" y="482.00" width="1.8" height="1.4"/><rect x="5.9" y="484.25" width="11.7" height="1.4"/><rect x="18.5" y="484.25" width="1.8" height="1.4"/><rect x="5.9" y="486.50" width="9.9" height="1.4"/><rect x="16.7" y="486.50" width="36.0" height="1.4"/><rect x="5.9" y="488.75" width="9.9" height="1.4"/><rect x="16.7" y="488.75" width="5.4" height="1.4"/><rect x="5.9" y="491.00" width="10.8" height="1.4"/><rect x="17.6" y="491.00" width="20.7" height="1.4"/><rect x="5.9" y="493.25" width="15.3" height="1.4"/><rect x="22.1" y="493.25" width="2.7" height="1.4"/><rect x="4.1" y="495.50" width="1.8" height="1.4"/><rect x="4.1" y="497.75" width="32.4" height="1.4"/><rect x="37.4" y="497.75" width="0.9" height="1.4"/><rect x="5.9" y="500.00" width="9.0" height="1.4"/><rect x="15.8" y="500.00" width="20.7" height="1.4"/><rect x="37.4" y="500.00" width="1.8" height="1.4"/><rect x="40.1" y="500.00" width="6.3" height="1.4"/><rect x="48.2" y="500.00" width="1.8" height="1.4"/><rect x="50.9" y="500.00" width="4.5" height="1.4"/><rect x="56.3" y="500.00" width="0.9" height="1.4"/><rect x="58.1" y="500.00" width="1.8" height="1.4"/><rect x="60.8" y="500.00" width="0.9" height="1.4"/><rect x="62.6" y="500.00" width="3.6" height="1.4"/><rect x="67.1" y="500.00" width="0.9" height="1.4"/><rect x="68.9" y="500.00" width="2.7" height="1.4"/><rect x="72.5" y="500.00" width="0.9" height="1.4"/><rect x="74.3" y="500.00" width="0.9" height="1.4"/><rect x="77.0" y="500.00" width="0.9" height="1.4"/><rect x="78.8" y="500.00" width="5.2" height="1.4"/><rect x="5.9" y="502.25" width="9.9" height="1.4"/><rect x="16.7" y="502.25" width="0.9" height="1.4"/><rect x="7.7" y="504.50" width="9.0" height="1.4"/><rect x="17.6" y="504.50" width="1.8" height="1.4"/><rect x="5.9" y="506.75" width="1.8" height="1.4"/><rect x="5.9" y="509.00" width="11.7" height="1.4"/><rect x="18.5" y="509.00" width="1.8" height="1.4"/><rect x="5.9" y="511.25" width="9.9" height="1.4"/><rect x="16.7" y="511.25" width="37.8" height="1.4"/><rect x="5.9" y="513.50" width="9.9" height="1.4"/><rect x="16.7" y="513.50" width="5.4" height="1.4"/><rect x="5.9" y="515.75" width="9.9" height="1.4"/><rect x="16.7" y="515.75" width="23.4" height="1.4"/><rect x="5.9" y="518.00" width="9.9" height="1.4"/><rect x="16.7" y="518.00" width="6.3" height="1.4"/><rect x="5.9" y="520.25" width="10.8" height="1.4"/><rect x="17.6" y="520.25" width="20.7" height="1.4"/><rect x="5.9" y="522.50" width="15.3" height="1.4"/><rect x="22.1" y="522.50" width="2.7" height="1.4"/><rect x="4.1" y="524.75" width="1.8" height="1.4"/><rect x="4.1" y="527.00" width="22.5" height="1.4"/><rect x="27.5" y="527.00" width="0.9" height="1.4"/><rect x="5.9" y="529.25" width="9.0" height="1.4"/><rect x="15.8" y="529.25" width="26.1" height="1.4"/><rect x="5.9" y="531.50" width="11.7" height="1.4"/><rect x="18.5" y="531.50" width="1.8" height="1.4"/><rect x="5.9" y="533.75" width="9.9" height="1.4"/><rect x="16.7" y="533.75" width="34.2" height="1.4"/><rect x="5.9" y="536.00" width="9.9" height="1.4"/><rect x="16.7" y="536.00" width="5.4" height="1.4"/><rect x="5.9" y="538.25" width="10.8" height="1.4"/><rect x="17.6" y="538.25" width="20.7" height="1.4"/><rect x="5.9" y="540.50" width="15.3" height="1.4"/><rect x="22.1" y="540.50" width="2.7" height="1.4"/><rect x="4.1" y="542.75" width="1.8" height="1.4"/><rect x="4.1" y="545.00" width="28.8" height="1.4"/><rect x="33.8" y="545.00" width="0.9" height="1.4"/><rect x="5.9" y="547.25" width="9.0" height="1.4"/><rect x="15.8" y="547.25" width="26.1" height="1.4"/><rect x="5.9" y="549.50" width="9.9" height="1.4"/><rect x="16.7" y="549.50" width="0.9" height="1.4"/><rect x="7.7" y="551.75" width="9.0" height="1.4"/><rect x="17.6" y="551.75" width="1.8" height="1.4"/><rect x="5.9" y="554.00" width="1.8" height="1.4"/><rect x="5.9" y="556.25" width="11.7" height="1.4"/><rect x="18.5" y="556.25" width="1.8" height="1.4"/><rect x="5.9" y="558.50" width="9.9" height="1.4"/><rect x="16.7" y="558.50" width="33.3" height="1.4"/><rect x="5.9" y="560.75" width="9.9" height="1.4"/><rect x="16.7" y="560.75" width="5.4" height="1.4"/><rect x="5.9" y="563.00" width="9.9" height="1.4"/><rect x="16.7" y="563.00" width="23.4" height="1.4"/><rect x="5.9" y="565.25" width="9.9" height="1.4"/><rect x="16.7" y="565.25" width="6.3" height="1.4"/><rect x="5.9" y="567.50" width="10.8" height="1.4"/><rect x="17.6" y="567.50" width="20.7" height="1.4"/><rect x="5.9" y="569.75" width="15.3" height="1.4"/><rect x="22.1" y="569.75" width="2.7" height="1.4"/><rect x="4.1" y="572.00" width="1.8" height="1.4"/><rect x="4.1" y="574.25" width="23.4" height="1.4"/><rect x="28.4" y="574.25" width="0.9" height="1.4"/><rect x="5.9" y="576.50" width="9.0" height="1.4"/><rect x="15.8" y="576.50" width="20.7" height="1.4"/><rect x="37.4" y="576.50" width="1.8" height="1.4"/><rect x="40.1" y="576.50" width="6.3" height="1.4"/><rect x="48.2" y="576.50" width="1.8" height="1.4"/><rect x="50.9" y="576.50" width="4.5" height="1.4"/><rect x="56.3" y="576.50" width="0.9" height="1.4"/><rect x="58.1" y="576.50" width="1.8" height="1.4"/><rect x="60.8" y="576.50" width="0.9" height="1.4"/><rect x="62.6" y="576.50" width="3.6" height="1.4"/><rect x="67.1" y="576.50" width="0.9" height="1.4"/><rect x="68.9" y="576.50" width="2.7" height="1.4"/><rect x="72.5" y="576.50" width="0.9" height="1.4"/><rect x="74.3" y="576.50" width="0.9" height="1.4"/><rect x="77.0" y="576.50" width="0.9" height="1.4"/><rect x="78.8" y="576.50" width="5.2" height="1.4"/><rect x="5.9" y="578.75" width="11.7" height="1.4"/><rect x="18.5" y="578.75" width="1.8" height="1.4"/><rect x="5.9" y="581.00" width="9.9" height="1.4"/><rect x="16.7" y="581.00" width="30.6" height="1.4"/><rect x="5.9" y="583.25" width="9.9" height="1.4"/><rect x="16.7" y="583.25" width="5.4" height="1.4"/><rect x="5.9" y="585.50" width="9.9" height="1.4"/><rect x="16.7" y="585.50" width="23.4" height="1.4"/><rect x="5.9" y="587.75" width="9.9" height="1.4"/><rect x="16.7" y="587.75" width="6.3" height="1.4"/><rect x="5.9" y="590.00" width="10.8" height="1.4"/><rect x="17.6" y="590.00" width="20.7" height="1.4"/><rect x="5.9" y="592.25" width="15.3" height="1.4"/><rect x="22.1" y="592.25" width="2.7" height="1.4"/><rect x="4.1" y="594.50" width="1.8" height="1.4"/><rect x="4.1" y="596.75" width="23.4" height="1.4"/><rect x="28.4" y="596.75" width="0.9" height="1.4"/><rect x="5.9" y="599.00" width="9.0" height="1.4"/><rect x="15.8" y="599.00" width="20.7" height="1.4"/><rect x="37.4" y="599.00" width="1.8" height="1.4"/><rect x="40.1" y="599.00" width="6.3" height="1.4"/><rect x="48.2" y="599.00" width="1.8" height="1.4"/><rect x="50.9" y="599.00" width="4.5" height="1.4"/><rect x="56.3" y="599.00" width="0.9" height="1.4"/><rect x="58.1" y="599.00" width="1.8" height="1.4"/><rect x="60.8" y="599.00" width="0.9" height="1.4"/><rect x="62.6" y="599.00" width="3.6" height="1.4"/><rect x="67.1" y="599.00" width="0.9" height="1.4"/><rect x="68.9" y="599.00" width="2.7" height="1.4"/><rect x="72.5" y="599.00" width="0.9" height="1.4"/><rect x="74.3" y="599.00" width="0.9" height="1.4"/><rect x="77.0" y="599.00" width="0.9" height="1.4"/><rect x="78.8" y="599.00" width="5.2" height="1.4"/><rect x="5.9" y="601.25" width="9.9" height="1.4"/><rect x="16.7" y="601.25" width="0.9" height="1.4"/><rect x="7.7" y="603.50" width="9.0" height="1.4"/><rect x="17.6" y="603.50" width="1.8" height="1.4"/><rect x="5.9" y="605.75" width="1.8" height="1.4"/><rect x="5.9" y="608.00" width="11.7" height="1.4"/><rect x="18.5" y="608.00" width="1.8" height="1.4"/><rect x="5.9" y="610.25" width="9.9" height="1.4"/><rect x="16.7" y="610.25" width="36.0" height="1.4"/><rect x="5.9" y="612.50" width="9.9" height="1.4"/><rect x="16.7" y="612.50" width="5.4" height="1.4"/><rect x="5.9" y="614.75" width="9.9" height="1.4"/><rect x="16.7" y="614.75" width="23.4" height="1.4"/><rect x="5.9" y="617.00" width="9.9" height="1.4"/><rect x="16.7" y="617.00" width="6.3" height="1.4"/><rect x="5.9" y="619.25" width="10.8" height="1.4"/><rect x="17.6" y="619.25" width="20.7" height="1.4"/><rect x="5.9" y="621.50" width="15.3" height="1.4"/><rect x="22.1" y="621.50" width="2.7" height="1.4"/><rect x="4.1" y="623.75" width="1.8" height="1.4"/><rect x="4.1" y="626.00" width="27.9" height="1.4"/><rect x="32.9" y="626.00" width="0.9" height="1.4"/><rect x="5.9" y="628.25" width="9.0" height="1.4"/><rect x="15.8" y="628.25" width="26.1" height="1.4"/><rect x="5.9" y="630.50" width="11.7" height="1.4"/><rect x="18.5" y="630.50" width="1.8" height="1.4"/><rect x="5.9" y="632.75" width="9.9" height="1.4"/><rect x="16.7" y="632.75" width="37.8" height="1.4"/><rect x="5.9" y="635.00" width="9.9" height="1.4"/><rect x="16.7" y="635.00" width="5.4" height="1.4"/><rect x="5.9" y="637.25" width="10.8" height="1.4"/><rect x="17.6" y="637.25" width="20.7" height="1.4"/><rect x="5.9" y="639.50" width="15.3" height="1.4"/><rect x="22.1" y="639.50" width="2.7" height="1.4"/><rect x="4.1" y="641.75" width="1.8" height="1.4"/><rect x="4.1" y="644.00" width="19.8" height="1.4"/><rect x="24.8" y="644.00" width="0.9" height="1.4"/><rect x="5.9" y="646.25" width="9.0" height="1.4"/><rect x="15.8" y="646.25" width="20.7" height="1.4"/><rect x="37.4" y="646.25" width="1.8" height="1.4"/><rect x="40.1" y="646.25" width="6.3" height="1.4"/><rect x="48.2" y="646.25" width="1.8" height="1.4"/><rect x="50.9" y="646.25" width="4.5" height="1.4"/><rect x="56.3" y="646.25" width="0.9" height="1.4"/><rect x="58.1" y="646.25" width="1.8" height="1.4"/><rect x="60.8" y="646.25" width="0.9" height="1.4"/><rect x="62.6" y="646.25" width="3.6" height="1.4"/><rect x="67.1" y="646.25" width="0.9" height="1.4"/><rect x="68.9" y="646.25" width="2.7" height="1.4"/><rect x="72.5" y="646.25" width="0.9" height="1.4"/><rect x="74.3" y="646.25" width="0.9" height="1.4"/><rect x="77.0" y="646.25" width="0.9" height="1.4"/><rect x="78.8" y="646.25" width="5.2" height="1.4"/><rect x="5.9" y="648.50" width="11.7" height="1.4"/><rect x="18.5" y="648.50" width="1.8" height="1.4"/><rect x="5.9" y="650.75" width="9.9" height="1.4"/><rect x="16.7" y="650.75" width="42.3" height="1.4"/><rect x="5.9" y="653.00" width="9.9" height="1.4"/><rect x="16.7" y="653.00" width="5.4" height="1.4"/><rect x="5.9" y="655.25" width="10.8" height="1.4"/><rect x="17.6" y="655.25" width="20.7" height="1.4"/><rect x="5.9" y="657.50" width="15.3" height="1.4"/><rect x="22.1" y="657.50" width="2.7" height="1.4"/><rect x="4.1" y="659.75" width="1.8" height="1.4"/><rect x="4.1" y="662.00" width="29.7" height="1.4"/><rect x="34.7" y="662.00" width="0.9" height="1.4"/><rect x="5.9" y="664.25" width="9.0" height="1.4"/><rect x="15.8" y="664.25" width="20.7" height="1.4"/><rect x="37.4" y="664.25" width="1.8" height="1.4"/><rect x="40.1" y="664.25" width="6.3" height="1.4"/><rect x="48.2" y="664.25" width="1.8" height="1.4"/><rect x="50.9" y="664.25" width="4.5" height="1.4"/><rect x="56.3" y="664.25" width="0.9" height="1.4"/><rect x="58.1" y="664.25" width="1.8" height="1.4"/><rect x="60.8" y="664.25" width="0.9" height="1.4"/><rect x="62.6" y="664.25" width="3.6" height="1.4"/><rect x="67.1" y="664.25" width="0.9" height="1.4"/><rect x="68.9" y="664.25" width="2.7" height="1.4"/><rect x="72.5" y="664.25" width="0.9" height="1.4"/><rect x="74.3" y="664.25" width="0.9" height="1.4"/><rect x="77.0" y="664.25" width="0.9" height="1.4"/><rect x="78.8" y="664.25" width="5.2" height="1.4"/><rect x="5.9" y="666.50" width="9.9" height="1.4"/><rect x="16.7" y="666.50" width="0.9" height="1.4"/><rect x="7.7" y="668.75" width="9.0" height="1.4"/><rect x="17.6" y="668.75" width="1.8" height="1.4"/><rect x="5.9" y="671.00" width="1.8" height="1.4"/><rect x="5.9" y="673.25" width="11.7" height="1.4"/><rect x="18.5" y="673.25" width="1.8" height="1.4"/><rect x="5.9" y="675.50" width="9.9" height="1.4"/><rect x="16.7" y="675.50" width="36.9" height="1.4"/><rect x="5.9" y="677.75" width="9.9" height="1.4"/><rect x="16.7" y="677.75" width="5.4" height="1.4"/><rect x="5.9" y="680.00" width="10.8" height="1.4"/><rect x="17.6" y="680.00" width="20.7" height="1.4"/></g></svg>
<div class="a" style="left:1818px;top:500.09999999999997px;width:85px;height:1.6px;background:rgba(214,150,50,0.5)"></div>
<div class="a" style="left:1818px;top:519.7px;width:85px;height:1.6px;background:rgba(214,150,50,0.5)"></div>
<div class="a" style="left:1818px;top:527.2px;width:85px;height:1.6px;background:rgba(214,150,50,0.5)"></div>
<div class="a" style="left:1818px;top:538.9000000000001px;width:85px;height:1.6px;background:rgba(214,150,50,0.5)"></div>
<div class="a" style="left:1815px;top:297px;width:2px;height:2.5px;background:#2a78c0"></div>
<div class="a" style="left:1815px;top:304px;width:2px;height:2.5px;background:#2a78c0"></div>
<div class="a" style="left:1815px;top:313px;width:2px;height:2.5px;background:#2a78c0"></div>
<div class="a" style="left:1815px;top:320px;width:2px;height:2.5px;background:#2a78c0"></div>
<div class="a" style="left:1903px;top:123.25px;width:17px;height:682px;background:#1f1f1f;border-left:1px solid #2a2a2a"></div>
<div class="a" style="left:1904px;top:288px;width:16px;height:23.5px;background:rgba(121,121,121,0.45)"></div>
<div class="a" style="left:1904px;top:164px;width:5px;height:6.7px;background:#1f7ad0"></div>
<div class="a" style="left:1909.5px;top:176px;width:6px;height:6.5px;background:#b8862e"></div>
<div class="a" style="left:1909.5px;top:313px;width:6px;height:8px;background:#b8862e"></div>
<div class="a" style="left:1904px;top:291px;width:5px;height:5px;background:#c8d8e8"></div>
<div class="a" style="left:1903px;top:864px;width:17px;height:236px;background:#1a1a1a;border-left:1px solid #222"></div>
<div class="a" style="left:1905px;top:1094px;width:5px;height:5px;background:#3a3a3a"></div></body></html>
